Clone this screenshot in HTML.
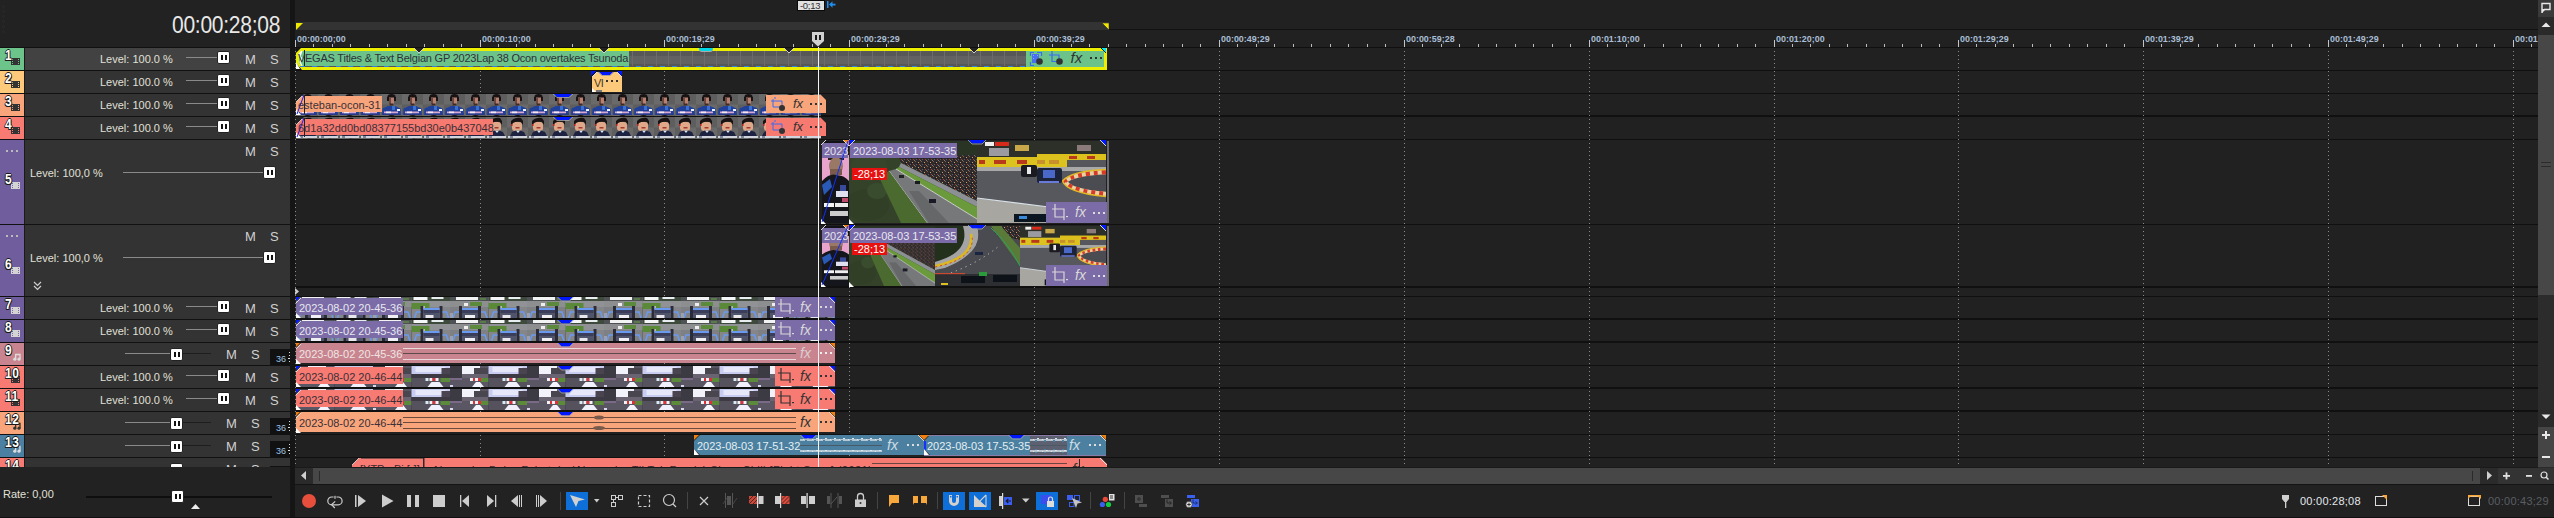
<!DOCTYPE html>
<html><head><meta charset="utf-8"><style>
html,body{margin:0;padding:0;width:2554px;height:518px;overflow:hidden;background:#212121;}
body{position:relative;font-family:"Liberation Sans",sans-serif;}
body>div,body>span,body>svg{position:absolute;}
.t{position:absolute;white-space:nowrap;line-height:1;}
.rl{font-size:9.6px;color:#a9bfd6;letter-spacing:0px;font-weight:bold;transform:scaleX(0.93);transform-origin:0 0;}
.num{font-size:15px;font-weight:bold;color:#fff;letter-spacing:0.6px;transform:scaleX(0.8);transform-origin:0 0;text-shadow:-1px 0 #1a1a1a,1px 0 #1a1a1a,0 -1px #1a1a1a,0 1px #1a1a1a,1px 1px #1a1a1a,-1px 1px #1a1a1a;}
.knob{position:absolute;width:11px;height:11px;background:#fff;border:1px solid #222;border-radius:2px;box-sizing:content-box;}
.knob i{position:absolute;top:3px;width:2px;height:5px;background:#111;}
.knob i:first-child{left:3px}.knob i:last-child{left:7px}
</style></head><body>
<div style="left:0px;top:0px;width:290px;height:47px;background:#222222;"></div>
<div style="left:290px;top:0px;width:5px;height:518px;background:#151515;"></div>
<div style="left:295px;top:0px;width:2243px;height:47px;background:#212121;"></div>
<div style="left:2538px;top:0px;width:16px;height:518px;background:#2b2b2b;"></div>
<div style="left:2px;top:5px;width:3px;height:3px;border:1px solid #2c2c2c;border-radius:50%;box-sizing:border-box"></div>
<div style="left:2px;top:10px;width:3px;height:3px;border:1px solid #2c2c2c;border-radius:50%;box-sizing:border-box"></div>
<div style="left:2px;top:15px;width:3px;height:3px;border:1px solid #2c2c2c;border-radius:50%;box-sizing:border-box"></div>
<div style="left:2px;top:20px;width:3px;height:3px;border:1px solid #2c2c2c;border-radius:50%;box-sizing:border-box"></div>
<div style="left:2px;top:25px;width:3px;height:3px;border:1px solid #2c2c2c;border-radius:50%;box-sizing:border-box"></div>
<div style="left:2px;top:30px;width:3px;height:3px;border:1px solid #2c2c2c;border-radius:50%;box-sizing:border-box"></div>
<span class="t" style="left:172px;top:13.5px;font-size:23px;color:#e8e8e8;letter-spacing:-0.3px;transform:scaleX(0.915);transform-origin:0 0;">00:00:28;08</span>
<div style="left:296px;top:22px;width:813px;height:8px;background:#333333;"></div>
<div style="left:1109px;top:29px;width:1429px;height:1px;background:#121212;"></div>
<svg style="left:296px;top:23px" width="8" height="8"><polygon points="0,0 7,0 0,7" fill="#f0e800"/></svg>
<svg style="left:1102px;top:23px" width="8" height="8"><polygon points="0,0 7,0 7,7" fill="#f0e800" stroke="#1a1a30" stroke-width="0.5"/></svg>
<div style="left:295px;top:40px;width:1px;height:8px;background:#c4c4c4"></div><span class="t rl" style="left:297px;top:34px;">00:00:00;00</span><div style="left:313px;top:44px;width:1px;height:3px;background:#bdbdbd"></div><div style="left:332px;top:44px;width:1px;height:3px;background:#bdbdbd"></div><div style="left:350px;top:44px;width:1px;height:3px;background:#bdbdbd"></div><div style="left:369px;top:44px;width:1px;height:3px;background:#bdbdbd"></div><div style="left:387px;top:44px;width:1px;height:3px;background:#bdbdbd"></div><div style="left:406px;top:44px;width:1px;height:3px;background:#bdbdbd"></div><div style="left:424px;top:44px;width:1px;height:3px;background:#bdbdbd"></div><div style="left:443px;top:44px;width:1px;height:3px;background:#bdbdbd"></div><div style="left:461px;top:44px;width:1px;height:3px;background:#bdbdbd"></div><div style="left:480px;top:40px;width:1px;height:8px;background:#c4c4c4"></div><span class="t rl" style="left:482px;top:34px;">00:00:10;00</span><div style="left:498px;top:44px;width:1px;height:3px;background:#bdbdbd"></div><div style="left:516px;top:44px;width:1px;height:3px;background:#bdbdbd"></div><div style="left:535px;top:44px;width:1px;height:3px;background:#bdbdbd"></div><div style="left:553px;top:44px;width:1px;height:3px;background:#bdbdbd"></div><div style="left:572px;top:44px;width:1px;height:3px;background:#bdbdbd"></div><div style="left:590px;top:44px;width:1px;height:3px;background:#bdbdbd"></div><div style="left:608px;top:44px;width:1px;height:3px;background:#bdbdbd"></div><div style="left:627px;top:44px;width:1px;height:3px;background:#bdbdbd"></div><div style="left:645px;top:44px;width:1px;height:3px;background:#bdbdbd"></div><div style="left:664px;top:40px;width:1px;height:8px;background:#c4c4c4"></div><span class="t rl" style="left:666px;top:34px;">00:00:19;29</span><div style="left:682px;top:44px;width:1px;height:3px;background:#bdbdbd"></div><div style="left:701px;top:44px;width:1px;height:3px;background:#bdbdbd"></div><div style="left:719px;top:44px;width:1px;height:3px;background:#bdbdbd"></div><div style="left:738px;top:44px;width:1px;height:3px;background:#bdbdbd"></div><div style="left:756px;top:44px;width:1px;height:3px;background:#bdbdbd"></div><div style="left:775px;top:44px;width:1px;height:3px;background:#bdbdbd"></div><div style="left:793px;top:44px;width:1px;height:3px;background:#bdbdbd"></div><div style="left:812px;top:44px;width:1px;height:3px;background:#bdbdbd"></div><div style="left:830px;top:44px;width:1px;height:3px;background:#bdbdbd"></div><div style="left:849px;top:40px;width:1px;height:8px;background:#c4c4c4"></div><span class="t rl" style="left:851px;top:34px;">00:00:29;29</span><div style="left:867px;top:44px;width:1px;height:3px;background:#bdbdbd"></div><div style="left:886px;top:44px;width:1px;height:3px;background:#bdbdbd"></div><div style="left:904px;top:44px;width:1px;height:3px;background:#bdbdbd"></div><div style="left:923px;top:44px;width:1px;height:3px;background:#bdbdbd"></div><div style="left:941px;top:44px;width:1px;height:3px;background:#bdbdbd"></div><div style="left:960px;top:44px;width:1px;height:3px;background:#bdbdbd"></div><div style="left:978px;top:44px;width:1px;height:3px;background:#bdbdbd"></div><div style="left:997px;top:44px;width:1px;height:3px;background:#bdbdbd"></div><div style="left:1015px;top:44px;width:1px;height:3px;background:#bdbdbd"></div><div style="left:1034px;top:40px;width:1px;height:8px;background:#c4c4c4"></div><span class="t rl" style="left:1036px;top:34px;">00:00:39;29</span><div style="left:1052px;top:44px;width:1px;height:3px;background:#bdbdbd"></div><div style="left:1071px;top:44px;width:1px;height:3px;background:#bdbdbd"></div><div style="left:1089px;top:44px;width:1px;height:3px;background:#bdbdbd"></div><div style="left:1108px;top:44px;width:1px;height:3px;background:#bdbdbd"></div><div style="left:1126px;top:44px;width:1px;height:3px;background:#bdbdbd"></div><div style="left:1145px;top:44px;width:1px;height:3px;background:#bdbdbd"></div><div style="left:1163px;top:44px;width:1px;height:3px;background:#bdbdbd"></div><div style="left:1182px;top:44px;width:1px;height:3px;background:#bdbdbd"></div><div style="left:1200px;top:44px;width:1px;height:3px;background:#bdbdbd"></div><div style="left:1219px;top:40px;width:1px;height:8px;background:#c4c4c4"></div><span class="t rl" style="left:1221px;top:34px;">00:00:49;29</span><div style="left:1237px;top:44px;width:1px;height:3px;background:#bdbdbd"></div><div style="left:1256px;top:44px;width:1px;height:3px;background:#bdbdbd"></div><div style="left:1274px;top:44px;width:1px;height:3px;background:#bdbdbd"></div><div style="left:1293px;top:44px;width:1px;height:3px;background:#bdbdbd"></div><div style="left:1311px;top:44px;width:1px;height:3px;background:#bdbdbd"></div><div style="left:1330px;top:44px;width:1px;height:3px;background:#bdbdbd"></div><div style="left:1348px;top:44px;width:1px;height:3px;background:#bdbdbd"></div><div style="left:1367px;top:44px;width:1px;height:3px;background:#bdbdbd"></div><div style="left:1385px;top:44px;width:1px;height:3px;background:#bdbdbd"></div><div style="left:1404px;top:40px;width:1px;height:8px;background:#c4c4c4"></div><span class="t rl" style="left:1406px;top:34px;">00:00:59;28</span><div style="left:1422px;top:44px;width:1px;height:3px;background:#bdbdbd"></div><div style="left:1441px;top:44px;width:1px;height:3px;background:#bdbdbd"></div><div style="left:1459px;top:44px;width:1px;height:3px;background:#bdbdbd"></div><div style="left:1478px;top:44px;width:1px;height:3px;background:#bdbdbd"></div><div style="left:1496px;top:44px;width:1px;height:3px;background:#bdbdbd"></div><div style="left:1515px;top:44px;width:1px;height:3px;background:#bdbdbd"></div><div style="left:1533px;top:44px;width:1px;height:3px;background:#bdbdbd"></div><div style="left:1552px;top:44px;width:1px;height:3px;background:#bdbdbd"></div><div style="left:1570px;top:44px;width:1px;height:3px;background:#bdbdbd"></div><div style="left:1589px;top:40px;width:1px;height:8px;background:#c4c4c4"></div><span class="t rl" style="left:1591px;top:34px;">00:01:10;00</span><div style="left:1607px;top:44px;width:1px;height:3px;background:#bdbdbd"></div><div style="left:1626px;top:44px;width:1px;height:3px;background:#bdbdbd"></div><div style="left:1644px;top:44px;width:1px;height:3px;background:#bdbdbd"></div><div style="left:1663px;top:44px;width:1px;height:3px;background:#bdbdbd"></div><div style="left:1681px;top:44px;width:1px;height:3px;background:#bdbdbd"></div><div style="left:1700px;top:44px;width:1px;height:3px;background:#bdbdbd"></div><div style="left:1718px;top:44px;width:1px;height:3px;background:#bdbdbd"></div><div style="left:1737px;top:44px;width:1px;height:3px;background:#bdbdbd"></div><div style="left:1755px;top:44px;width:1px;height:3px;background:#bdbdbd"></div><div style="left:1774px;top:40px;width:1px;height:8px;background:#c4c4c4"></div><span class="t rl" style="left:1776px;top:34px;">00:01:20;00</span><div style="left:1792px;top:44px;width:1px;height:3px;background:#bdbdbd"></div><div style="left:1810px;top:44px;width:1px;height:3px;background:#bdbdbd"></div><div style="left:1829px;top:44px;width:1px;height:3px;background:#bdbdbd"></div><div style="left:1847px;top:44px;width:1px;height:3px;background:#bdbdbd"></div><div style="left:1866px;top:44px;width:1px;height:3px;background:#bdbdbd"></div><div style="left:1884px;top:44px;width:1px;height:3px;background:#bdbdbd"></div><div style="left:1902px;top:44px;width:1px;height:3px;background:#bdbdbd"></div><div style="left:1921px;top:44px;width:1px;height:3px;background:#bdbdbd"></div><div style="left:1939px;top:44px;width:1px;height:3px;background:#bdbdbd"></div><div style="left:1958px;top:40px;width:1px;height:8px;background:#c4c4c4"></div><span class="t rl" style="left:1960px;top:34px;">00:01:29;29</span><div style="left:1976px;top:44px;width:1px;height:3px;background:#bdbdbd"></div><div style="left:1995px;top:44px;width:1px;height:3px;background:#bdbdbd"></div><div style="left:2013px;top:44px;width:1px;height:3px;background:#bdbdbd"></div><div style="left:2032px;top:44px;width:1px;height:3px;background:#bdbdbd"></div><div style="left:2050px;top:44px;width:1px;height:3px;background:#bdbdbd"></div><div style="left:2069px;top:44px;width:1px;height:3px;background:#bdbdbd"></div><div style="left:2087px;top:44px;width:1px;height:3px;background:#bdbdbd"></div><div style="left:2106px;top:44px;width:1px;height:3px;background:#bdbdbd"></div><div style="left:2124px;top:44px;width:1px;height:3px;background:#bdbdbd"></div><div style="left:2143px;top:40px;width:1px;height:8px;background:#c4c4c4"></div><span class="t rl" style="left:2145px;top:34px;">00:01:39;29</span><div style="left:2161px;top:44px;width:1px;height:3px;background:#bdbdbd"></div><div style="left:2180px;top:44px;width:1px;height:3px;background:#bdbdbd"></div><div style="left:2198px;top:44px;width:1px;height:3px;background:#bdbdbd"></div><div style="left:2217px;top:44px;width:1px;height:3px;background:#bdbdbd"></div><div style="left:2235px;top:44px;width:1px;height:3px;background:#bdbdbd"></div><div style="left:2254px;top:44px;width:1px;height:3px;background:#bdbdbd"></div><div style="left:2272px;top:44px;width:1px;height:3px;background:#bdbdbd"></div><div style="left:2291px;top:44px;width:1px;height:3px;background:#bdbdbd"></div><div style="left:2309px;top:44px;width:1px;height:3px;background:#bdbdbd"></div><div style="left:2328px;top:40px;width:1px;height:8px;background:#c4c4c4"></div><span class="t rl" style="left:2330px;top:34px;">00:01:49;29</span><div style="left:2346px;top:44px;width:1px;height:3px;background:#bdbdbd"></div><div style="left:2365px;top:44px;width:1px;height:3px;background:#bdbdbd"></div><div style="left:2383px;top:44px;width:1px;height:3px;background:#bdbdbd"></div><div style="left:2402px;top:44px;width:1px;height:3px;background:#bdbdbd"></div><div style="left:2420px;top:44px;width:1px;height:3px;background:#bdbdbd"></div><div style="left:2439px;top:44px;width:1px;height:3px;background:#bdbdbd"></div><div style="left:2457px;top:44px;width:1px;height:3px;background:#bdbdbd"></div><div style="left:2476px;top:44px;width:1px;height:3px;background:#bdbdbd"></div><div style="left:2494px;top:44px;width:1px;height:3px;background:#bdbdbd"></div><div style="left:2513px;top:40px;width:1px;height:8px;background:#c4c4c4"></div><span class="t rl" style="left:2515px;top:34px;">00:01:59;29</span><div style="left:2531px;top:44px;width:1px;height:3px;background:#bdbdbd"></div>
<div style="left:295px;top:47px;width:2243px;height:1px;background:#101010;"></div>
<div style="left:0px;top:47px;width:290px;height:420px;background:#111111;"></div>
<div style="left:0px;top:48px;width:24px;height:22px;background:#6dc48b;"></div>
<div style="left:24px;top:48px;width:1px;height:22px;background:#1a1a1a;"></div>
<div style="left:25px;top:48px;width:265px;height:22px;background:#424242;"></div>
<svg style="left:11px;top:58px" width="9" height="7"><rect width="9" height="7" fill="#333"/><rect x="1" y="1" width="1" height="1" fill="#6dc48b"/><rect x="1" y="3" width="1" height="1" fill="#6dc48b"/><rect x="1" y="5" width="1" height="1" fill="#6dc48b"/><rect x="7" y="1" width="1" height="1" fill="#6dc48b"/><rect x="7" y="3" width="1" height="1" fill="#6dc48b"/><rect x="7" y="5" width="1" height="1" fill="#6dc48b"/></svg>
<span class="t num" style="left:5px;top:47px;">1</span>
<span class="t" style="left:100px;top:54px;font-size:11px;color:#e0e0d8;">Level: 100.0 %</span>
<div style="left:186px;top:57px;width:31px;height:1px;background:#8a8a8a;"></div>
<div class="knob" style="left:217px;top:51px"><i></i><i></i></div>
<span class="t" style="left:245px;top:53px;font-size:13px;color:#d0d0d0;">M</span>
<span class="t" style="left:270px;top:53px;font-size:13px;color:#d0d0d0;">S</span>
<div style="left:0px;top:71px;width:24px;height:22px;background:#fdc97b;"></div>
<div style="left:24px;top:71px;width:1px;height:22px;background:#1a1a1a;"></div>
<div style="left:25px;top:71px;width:265px;height:22px;background:#333333;"></div>
<svg style="left:11px;top:81px" width="9" height="7"><rect width="9" height="7" fill="#333"/><rect x="1" y="1" width="1" height="1" fill="#fdc97b"/><rect x="1" y="3" width="1" height="1" fill="#fdc97b"/><rect x="1" y="5" width="1" height="1" fill="#fdc97b"/><rect x="7" y="1" width="1" height="1" fill="#fdc97b"/><rect x="7" y="3" width="1" height="1" fill="#fdc97b"/><rect x="7" y="5" width="1" height="1" fill="#fdc97b"/></svg>
<span class="t num" style="left:5px;top:70px;">2</span>
<span class="t" style="left:100px;top:77px;font-size:11px;color:#e0e0d8;">Level: 100.0 %</span>
<div style="left:186px;top:80px;width:31px;height:1px;background:#8a8a8a;"></div>
<div class="knob" style="left:217px;top:74px"><i></i><i></i></div>
<span class="t" style="left:245px;top:76px;font-size:13px;color:#d0d0d0;">M</span>
<span class="t" style="left:270px;top:76px;font-size:13px;color:#d0d0d0;">S</span>
<div style="left:0px;top:94px;width:24px;height:22px;background:#f9a57b;"></div>
<div style="left:24px;top:94px;width:1px;height:22px;background:#1a1a1a;"></div>
<div style="left:25px;top:94px;width:265px;height:22px;background:#333333;"></div>
<svg style="left:11px;top:104px" width="9" height="7"><rect width="9" height="7" fill="#333"/><rect x="1" y="1" width="1" height="1" fill="#f9a57b"/><rect x="1" y="3" width="1" height="1" fill="#f9a57b"/><rect x="1" y="5" width="1" height="1" fill="#f9a57b"/><rect x="7" y="1" width="1" height="1" fill="#f9a57b"/><rect x="7" y="3" width="1" height="1" fill="#f9a57b"/><rect x="7" y="5" width="1" height="1" fill="#f9a57b"/></svg>
<span class="t num" style="left:5px;top:93px;">3</span>
<span class="t" style="left:100px;top:100px;font-size:11px;color:#e0e0d8;">Level: 100.0 %</span>
<div style="left:186px;top:103px;width:31px;height:1px;background:#8a8a8a;"></div>
<div class="knob" style="left:217px;top:97px"><i></i><i></i></div>
<span class="t" style="left:245px;top:99px;font-size:13px;color:#d0d0d0;">M</span>
<span class="t" style="left:270px;top:99px;font-size:13px;color:#d0d0d0;">S</span>
<div style="left:0px;top:117px;width:24px;height:22px;background:#f77b72;"></div>
<div style="left:24px;top:117px;width:1px;height:22px;background:#1a1a1a;"></div>
<div style="left:25px;top:117px;width:265px;height:22px;background:#333333;"></div>
<svg style="left:11px;top:127px" width="9" height="7"><rect width="9" height="7" fill="#333"/><rect x="1" y="1" width="1" height="1" fill="#f77b72"/><rect x="1" y="3" width="1" height="1" fill="#f77b72"/><rect x="1" y="5" width="1" height="1" fill="#f77b72"/><rect x="7" y="1" width="1" height="1" fill="#f77b72"/><rect x="7" y="3" width="1" height="1" fill="#f77b72"/><rect x="7" y="5" width="1" height="1" fill="#f77b72"/></svg>
<span class="t num" style="left:5px;top:116px;">4</span>
<span class="t" style="left:100px;top:123px;font-size:11px;color:#e0e0d8;">Level: 100.0 %</span>
<div style="left:186px;top:126px;width:31px;height:1px;background:#8a8a8a;"></div>
<div class="knob" style="left:217px;top:120px"><i></i><i></i></div>
<span class="t" style="left:245px;top:122px;font-size:13px;color:#d0d0d0;">M</span>
<span class="t" style="left:270px;top:122px;font-size:13px;color:#d0d0d0;">S</span>
<div style="left:0px;top:140px;width:24px;height:84px;background:#705d9d;"></div>
<div style="left:24px;top:140px;width:1px;height:84px;background:#1a1a1a;"></div>
<div style="left:25px;top:140px;width:265px;height:84px;background:#333333;"></div>
<svg style="left:11px;top:182px" width="9" height="7"><rect width="9" height="7" fill="#d4d4d4"/><rect x="1" y="1" width="1" height="1" fill="#7a6aa0"/><rect x="1" y="3" width="1" height="1" fill="#7a6aa0"/><rect x="1" y="5" width="1" height="1" fill="#7a6aa0"/><rect x="7" y="1" width="1" height="1" fill="#7a6aa0"/><rect x="7" y="3" width="1" height="1" fill="#7a6aa0"/><rect x="7" y="5" width="1" height="1" fill="#7a6aa0"/></svg>
<span class="t num" style="left:5px;top:171px;">5</span>
<div style="left:6px;top:150px;width:2px;height:2px;background:#bbb;box-shadow:5px 0 #bbb,10px 0 #bbb"></div>
<span class="t" style="left:245px;top:145px;font-size:13px;color:#d0d0d0;">M</span>
<span class="t" style="left:270px;top:145px;font-size:13px;color:#d0d0d0;">S</span>
<span class="t" style="left:30px;top:168px;font-size:11px;color:#e0e0d8;">Level: 100,0 %</span>
<div style="left:123px;top:172px;width:140px;height:1px;background:#8a8a8a;"></div>
<div class="knob" style="left:263px;top:166px"><i></i><i></i></div>
<div style="left:0px;top:225px;width:24px;height:71px;background:#705d9d;"></div>
<div style="left:24px;top:225px;width:1px;height:71px;background:#1a1a1a;"></div>
<div style="left:25px;top:225px;width:265px;height:71px;background:#333333;"></div>
<svg style="left:11px;top:267px" width="9" height="7"><rect width="9" height="7" fill="#d4d4d4"/><rect x="1" y="1" width="1" height="1" fill="#7a6aa0"/><rect x="1" y="3" width="1" height="1" fill="#7a6aa0"/><rect x="1" y="5" width="1" height="1" fill="#7a6aa0"/><rect x="7" y="1" width="1" height="1" fill="#7a6aa0"/><rect x="7" y="3" width="1" height="1" fill="#7a6aa0"/><rect x="7" y="5" width="1" height="1" fill="#7a6aa0"/></svg>
<span class="t num" style="left:5px;top:256px;">6</span>
<div style="left:6px;top:235px;width:2px;height:2px;background:#bbb;box-shadow:5px 0 #bbb,10px 0 #bbb"></div>
<span class="t" style="left:245px;top:230px;font-size:13px;color:#d0d0d0;">M</span>
<span class="t" style="left:270px;top:230px;font-size:13px;color:#d0d0d0;">S</span>
<span class="t" style="left:30px;top:253px;font-size:11px;color:#e0e0d8;">Level: 100,0 %</span>
<div style="left:123px;top:257px;width:140px;height:1px;background:#8a8a8a;"></div>
<div class="knob" style="left:263px;top:251px"><i></i><i></i></div>
<svg style="left:33px;top:281px" width="10" height="10"><polyline points="1,1 4.5,4.5 8,1" stroke="#cfcfcf" stroke-width="1.2" fill="none"/><polyline points="1,5 4.5,8.5 8,5" stroke="#cfcfcf" stroke-width="1.2" fill="none"/></svg>
<div style="left:0px;top:297px;width:24px;height:22px;background:#705d9d;"></div>
<div style="left:24px;top:297px;width:1px;height:22px;background:#1a1a1a;"></div>
<div style="left:25px;top:297px;width:265px;height:22px;background:#333333;"></div>
<svg style="left:11px;top:307px" width="9" height="7"><rect width="9" height="7" fill="#d4d4d4"/><rect x="1" y="1" width="1" height="1" fill="#7a6aa0"/><rect x="1" y="3" width="1" height="1" fill="#7a6aa0"/><rect x="1" y="5" width="1" height="1" fill="#7a6aa0"/><rect x="7" y="1" width="1" height="1" fill="#7a6aa0"/><rect x="7" y="3" width="1" height="1" fill="#7a6aa0"/><rect x="7" y="5" width="1" height="1" fill="#7a6aa0"/></svg>
<span class="t num" style="left:5px;top:296px;">7</span>
<span class="t" style="left:100px;top:303px;font-size:11px;color:#e0e0d8;">Level: 100.0 %</span>
<div style="left:186px;top:306px;width:31px;height:1px;background:#8a8a8a;"></div>
<div class="knob" style="left:217px;top:300px"><i></i><i></i></div>
<span class="t" style="left:245px;top:302px;font-size:13px;color:#d0d0d0;">M</span>
<span class="t" style="left:270px;top:302px;font-size:13px;color:#d0d0d0;">S</span>
<div style="left:0px;top:320px;width:24px;height:22px;background:#705d9d;"></div>
<div style="left:24px;top:320px;width:1px;height:22px;background:#1a1a1a;"></div>
<div style="left:25px;top:320px;width:265px;height:22px;background:#333333;"></div>
<svg style="left:11px;top:330px" width="9" height="7"><rect width="9" height="7" fill="#d4d4d4"/><rect x="1" y="1" width="1" height="1" fill="#7a6aa0"/><rect x="1" y="3" width="1" height="1" fill="#7a6aa0"/><rect x="1" y="5" width="1" height="1" fill="#7a6aa0"/><rect x="7" y="1" width="1" height="1" fill="#7a6aa0"/><rect x="7" y="3" width="1" height="1" fill="#7a6aa0"/><rect x="7" y="5" width="1" height="1" fill="#7a6aa0"/></svg>
<span class="t num" style="left:5px;top:319px;">8</span>
<span class="t" style="left:100px;top:326px;font-size:11px;color:#e0e0d8;">Level: 100.0 %</span>
<div style="left:186px;top:329px;width:31px;height:1px;background:#8a8a8a;"></div>
<div class="knob" style="left:217px;top:323px"><i></i><i></i></div>
<span class="t" style="left:245px;top:325px;font-size:13px;color:#d0d0d0;">M</span>
<span class="t" style="left:270px;top:325px;font-size:13px;color:#d0d0d0;">S</span>
<div style="left:0px;top:343px;width:24px;height:22px;background:#c8848f;"></div>
<div style="left:24px;top:343px;width:1px;height:22px;background:#1a1a1a;"></div>
<div style="left:25px;top:343px;width:265px;height:22px;background:#333333;"></div>
<svg style="left:13px;top:353px" width="8" height="8"><path d="M2,1.5 H7 V6" stroke="#dcdcdc" stroke-width="1.3" fill="none"/><rect x="2" y="1" width="1.3" height="5.5" fill="#dcdcdc"/><circle cx="1.8" cy="6.2" r="1.6" fill="#dcdcdc"/><circle cx="6" cy="6.2" r="1.6" fill="#dcdcdc"/></svg>
<span class="t num" style="left:5px;top:342px;">9</span>
<div style="left:125px;top:353px;width:46px;height:1px;background:#8a8a8a;"></div>
<div style="left:182px;top:353px;width:29px;height:1px;background:#1e1e1e;"></div>
<div class="knob" style="left:170px;top:348px"><i></i><i></i></div>
<span class="t" style="left:226px;top:348px;font-size:13px;color:#d0d0d0;">M</span>
<span class="t" style="left:251px;top:348px;font-size:13px;color:#d0d0d0;">S</span>
<div style="left:270px;top:349px;width:20px;height:16px;background:#111111;"></div>
<span class="t" style="left:276px;top:355px;font-size:9px;color:#9fc3e6;">36</span>
<svg style="left:288px;top:351px" width="3" height="12"><rect x="1" y="1" width="1" height="1" fill="#ddd"/><rect x="1" y="4" width="1" height="1" fill="#ddd"/><rect x="0" y="7" width="2" height="1" fill="#ddd"/><rect x="1" y="10" width="1" height="1" fill="#ddd"/></svg>
<div style="left:0px;top:366px;width:24px;height:22px;background:#f77b72;"></div>
<div style="left:24px;top:366px;width:1px;height:22px;background:#1a1a1a;"></div>
<div style="left:25px;top:366px;width:265px;height:22px;background:#333333;"></div>
<svg style="left:11px;top:376px" width="9" height="7"><rect width="9" height="7" fill="#333"/><rect x="1" y="1" width="1" height="1" fill="#f77b72"/><rect x="1" y="3" width="1" height="1" fill="#f77b72"/><rect x="1" y="5" width="1" height="1" fill="#f77b72"/><rect x="7" y="1" width="1" height="1" fill="#f77b72"/><rect x="7" y="3" width="1" height="1" fill="#f77b72"/><rect x="7" y="5" width="1" height="1" fill="#f77b72"/></svg>
<span class="t num" style="left:5px;top:365px;">10</span>
<span class="t" style="left:100px;top:372px;font-size:11px;color:#e0e0d8;">Level: 100.0 %</span>
<div style="left:186px;top:375px;width:31px;height:1px;background:#8a8a8a;"></div>
<div class="knob" style="left:217px;top:369px"><i></i><i></i></div>
<span class="t" style="left:245px;top:371px;font-size:13px;color:#d0d0d0;">M</span>
<span class="t" style="left:270px;top:371px;font-size:13px;color:#d0d0d0;">S</span>
<div style="left:0px;top:389px;width:24px;height:22px;background:#f77b72;"></div>
<div style="left:24px;top:389px;width:1px;height:22px;background:#1a1a1a;"></div>
<div style="left:25px;top:389px;width:265px;height:22px;background:#333333;"></div>
<svg style="left:11px;top:399px" width="9" height="7"><rect width="9" height="7" fill="#333"/><rect x="1" y="1" width="1" height="1" fill="#f77b72"/><rect x="1" y="3" width="1" height="1" fill="#f77b72"/><rect x="1" y="5" width="1" height="1" fill="#f77b72"/><rect x="7" y="1" width="1" height="1" fill="#f77b72"/><rect x="7" y="3" width="1" height="1" fill="#f77b72"/><rect x="7" y="5" width="1" height="1" fill="#f77b72"/></svg>
<span class="t num" style="left:5px;top:388px;">11</span>
<span class="t" style="left:100px;top:395px;font-size:11px;color:#e0e0d8;">Level: 100.0 %</span>
<div style="left:186px;top:398px;width:31px;height:1px;background:#8a8a8a;"></div>
<div class="knob" style="left:217px;top:392px"><i></i><i></i></div>
<span class="t" style="left:245px;top:394px;font-size:13px;color:#d0d0d0;">M</span>
<span class="t" style="left:270px;top:394px;font-size:13px;color:#d0d0d0;">S</span>
<div style="left:0px;top:412px;width:24px;height:22px;background:#f9a57b;"></div>
<div style="left:24px;top:412px;width:1px;height:22px;background:#1a1a1a;"></div>
<div style="left:25px;top:412px;width:265px;height:22px;background:#333333;"></div>
<svg style="left:13px;top:422px" width="8" height="8"><path d="M2,1.5 H7 V6" stroke="#333" stroke-width="1.3" fill="none"/><rect x="2" y="1" width="1.3" height="5.5" fill="#333"/><circle cx="1.8" cy="6.2" r="1.6" fill="#333"/><circle cx="6" cy="6.2" r="1.6" fill="#333"/></svg>
<span class="t num" style="left:5px;top:411px;">12</span>
<div style="left:125px;top:422px;width:46px;height:1px;background:#8a8a8a;"></div>
<div style="left:182px;top:422px;width:29px;height:1px;background:#1e1e1e;"></div>
<div class="knob" style="left:170px;top:417px"><i></i><i></i></div>
<span class="t" style="left:226px;top:417px;font-size:13px;color:#d0d0d0;">M</span>
<span class="t" style="left:251px;top:417px;font-size:13px;color:#d0d0d0;">S</span>
<div style="left:270px;top:418px;width:20px;height:16px;background:#111111;"></div>
<span class="t" style="left:276px;top:424px;font-size:9px;color:#9fc3e6;">36</span>
<svg style="left:288px;top:420px" width="3" height="12"><rect x="1" y="1" width="1" height="1" fill="#ddd"/><rect x="1" y="4" width="1" height="1" fill="#ddd"/><rect x="0" y="7" width="2" height="1" fill="#ddd"/><rect x="1" y="10" width="1" height="1" fill="#ddd"/></svg>
<div style="left:0px;top:435px;width:24px;height:22px;background:#4b80a2;"></div>
<div style="left:24px;top:435px;width:1px;height:22px;background:#1a1a1a;"></div>
<div style="left:25px;top:435px;width:265px;height:22px;background:#333333;"></div>
<svg style="left:13px;top:445px" width="8" height="8"><path d="M2,1.5 H7 V6" stroke="#dcdcdc" stroke-width="1.3" fill="none"/><rect x="2" y="1" width="1.3" height="5.5" fill="#dcdcdc"/><circle cx="1.8" cy="6.2" r="1.6" fill="#dcdcdc"/><circle cx="6" cy="6.2" r="1.6" fill="#dcdcdc"/></svg>
<span class="t num" style="left:5px;top:434px;">13</span>
<div style="left:125px;top:445px;width:46px;height:1px;background:#8a8a8a;"></div>
<div style="left:182px;top:445px;width:29px;height:1px;background:#1e1e1e;"></div>
<div class="knob" style="left:170px;top:440px"><i></i><i></i></div>
<span class="t" style="left:226px;top:440px;font-size:13px;color:#d0d0d0;">M</span>
<span class="t" style="left:251px;top:440px;font-size:13px;color:#d0d0d0;">S</span>
<div style="left:270px;top:441px;width:20px;height:16px;background:#111111;"></div>
<span class="t" style="left:276px;top:447px;font-size:9px;color:#9fc3e6;">36</span>
<svg style="left:288px;top:443px" width="3" height="12"><rect x="1" y="1" width="1" height="1" fill="#ddd"/><rect x="1" y="4" width="1" height="1" fill="#ddd"/><rect x="0" y="7" width="2" height="1" fill="#ddd"/><rect x="1" y="10" width="1" height="1" fill="#ddd"/></svg>
<div style="left:0px;top:458px;width:24px;height:9px;background:#f77b72;"></div>
<div style="left:24px;top:458px;width:1px;height:9px;background:#1a1a1a;"></div>
<div style="left:25px;top:458px;width:265px;height:9px;background:#333333;"></div>
<svg style="left:13px;top:468px" width="8" height="8"><path d="M2,1.5 H7 V6" stroke="#333" stroke-width="1.3" fill="none"/><rect x="2" y="1" width="1.3" height="5.5" fill="#333"/><circle cx="1.8" cy="6.2" r="1.6" fill="#333"/><circle cx="6" cy="6.2" r="1.6" fill="#333"/></svg>
<span class="t num" style="left:5px;top:457px;">14</span>
<div class="knob" style="left:170px;top:463px"><i></i><i></i></div>
<span class="t" style="left:226px;top:463px;font-size:13px;color:#d0d0d0;">M</span>
<span class="t" style="left:251px;top:463px;font-size:13px;color:#d0d0d0;">S</span>
<div style="left:270px;top:466px;width:20px;height:3px;background:#111111;"></div>
<div style="left:0px;top:467px;width:290px;height:1px;background:#111;"></div>
<div style="left:295px;top:48px;width:2243px;height:419px;background:#212121;"></div>
<div style="left:295px;top:70px;width:2243px;height:1px;background:#101010;"></div>
<div style="left:295px;top:93px;width:2243px;height:1px;background:#101010;"></div>
<div style="left:295px;top:115px;width:2243px;height:2px;background:#101010;"></div>
<div style="left:295px;top:139px;width:2243px;height:1px;background:#101010;"></div>
<div style="left:295px;top:224px;width:2243px;height:1px;background:#101010;"></div>
<div style="left:295px;top:286px;width:2243px;height:2px;background:#101010;"></div>
<div style="left:295px;top:296px;width:2243px;height:1px;background:#101010;"></div>
<div style="left:295px;top:318px;width:2243px;height:2px;background:#101010;"></div>
<div style="left:295px;top:341px;width:2243px;height:2px;background:#101010;"></div>
<div style="left:295px;top:365px;width:2243px;height:1px;background:#101010;"></div>
<div style="left:295px;top:387px;width:2243px;height:2px;background:#101010;"></div>
<div style="left:295px;top:410px;width:2243px;height:2px;background:#101010;"></div>
<div style="left:295px;top:434px;width:2243px;height:1px;background:#101010;"></div>
<div style="left:295px;top:457px;width:2243px;height:1px;background:#101010;"></div>
<svg style="left:295px;top:288px" width="6" height="8"><polygon points="0,0 4,3.5 0,7" fill="#cfcfcf"/></svg>
<div style="left:295px;top:48px;width:1px;height:419px;background:repeating-linear-gradient(to bottom,transparent 0,transparent 3px,#8a8a8a 3px,#8a8a8a 4px)"></div>
<div style="left:480px;top:48px;width:1px;height:419px;background:repeating-linear-gradient(to bottom,transparent 0,transparent 3px,#8a8a8a 3px,#8a8a8a 4px)"></div>
<div style="left:664px;top:48px;width:1px;height:419px;background:repeating-linear-gradient(to bottom,transparent 0,transparent 3px,#8a8a8a 3px,#8a8a8a 4px)"></div>
<div style="left:849px;top:48px;width:1px;height:419px;background:repeating-linear-gradient(to bottom,transparent 0,transparent 3px,#8a8a8a 3px,#8a8a8a 4px)"></div>
<div style="left:1034px;top:48px;width:1px;height:419px;background:repeating-linear-gradient(to bottom,transparent 0,transparent 3px,#8a8a8a 3px,#8a8a8a 4px)"></div>
<div style="left:1219px;top:48px;width:1px;height:419px;background:repeating-linear-gradient(to bottom,transparent 0,transparent 3px,#8a8a8a 3px,#8a8a8a 4px)"></div>
<div style="left:1404px;top:48px;width:1px;height:419px;background:repeating-linear-gradient(to bottom,transparent 0,transparent 3px,#8a8a8a 3px,#8a8a8a 4px)"></div>
<div style="left:1589px;top:48px;width:1px;height:419px;background:repeating-linear-gradient(to bottom,transparent 0,transparent 3px,#8a8a8a 3px,#8a8a8a 4px)"></div>
<div style="left:1774px;top:48px;width:1px;height:419px;background:repeating-linear-gradient(to bottom,transparent 0,transparent 3px,#8a8a8a 3px,#8a8a8a 4px)"></div>
<div style="left:1958px;top:48px;width:1px;height:419px;background:repeating-linear-gradient(to bottom,transparent 0,transparent 3px,#8a8a8a 3px,#8a8a8a 4px)"></div>
<div style="left:2143px;top:48px;width:1px;height:419px;background:repeating-linear-gradient(to bottom,transparent 0,transparent 3px,#8a8a8a 3px,#8a8a8a 4px)"></div>
<div style="left:2328px;top:48px;width:1px;height:419px;background:repeating-linear-gradient(to bottom,transparent 0,transparent 3px,#8a8a8a 3px,#8a8a8a 4px)"></div>
<div style="left:2513px;top:48px;width:1px;height:419px;background:repeating-linear-gradient(to bottom,transparent 0,transparent 3px,#8a8a8a 3px,#8a8a8a 4px)"></div>
<svg width="0" height="0" style="left:0;top:0"><defs>
<pattern id="chk" width="12" height="16" patternUnits="userSpaceOnUse"><rect width="12" height="8" fill="#575757"/><rect y="8" width="12" height="8" fill="#626262"/><rect width="1" height="16" fill="#6c6c6c"/></pattern>
<pattern id="ocon" width="21" height="21" patternUnits="userSpaceOnUse" patternTransform="translate(1,0)">
 <rect width="21" height="21" fill="#5e5e5e"/><rect width="10.5" height="10.5" fill="#6a6a6a"/><rect x="10.5" y="10.5" width="10.5" height="10.5" fill="#6a6a6a"/>
 <ellipse cx="10.5" cy="2.5" rx="4" ry="2.5" fill="#181212"/><rect x="6" y="3" width="2" height="4" fill="#181212"/><rect x="13" y="3" width="2" height="4" fill="#181212"/>
 <rect x="8" y="3.5" width="5" height="7" fill="#b88070"/><rect x="8" y="4" width="2" height="6" fill="#6a4a40"/><rect x="8.5" y="9.5" width="4" height="2" fill="#3a2a28"/>
 <polygon points="1,21 1.5,14.5 7,12 14,12 19.5,14.5 20,21" fill="#20409a"/><rect x="11" y="12" width="3" height="4" fill="#3a70d0"/>
 <rect x="3" y="17.5" width="14" height="2" fill="#d8a8d0"/><rect x="5" y="17.5" width="5" height="2" fill="#f0e8f0"/><rect x="16" y="15" width="3" height="2" fill="#f0f4ff"/><rect x="2" y="19.5" width="17" height="1.5" fill="#2a3a8a"/>
</pattern>
<pattern id="p2" width="21" height="21" patternUnits="userSpaceOnUse" patternTransform="translate(1,0)">
 <rect width="21" height="21" fill="#5e5e5e"/><rect width="10.5" height="10.5" fill="#6a6a6a"/><rect x="10.5" y="10.5" width="10.5" height="10.5" fill="#6a6a6a"/>
 <rect x="5" y="5" width="10" height="9" rx="3" fill="#e0a888"/><path d="M4,9 V4 Q8,0 14,1 L16,4 V8 L14,5 Q9,4 6,6 Z" fill="#181212"/><rect x="8.5" y="10" width="4" height="1.5" fill="#a03a30"/><rect x="4" y="7" width="1.5" height="2" fill="#c02020"/>
 <polygon points="3,19 5,15 9,13.5 13,13.5 17,15 19,19" fill="#1c2240"/><polygon points="9,13.5 11,16 13,13.5" fill="#d8e8f0"/><rect x="1" y="19" width="19" height="2" fill="#d0d4dc"/><rect x="3" y="19.5" width="3" height="1" fill="#2a3a5a"/>
</pattern>
<pattern id="wfn" width="9" height="4" patternUnits="userSpaceOnUse"><rect x="1" y="0" width="1" height="1" fill="#dfe6ea"/><rect x="5" y="3" width="2" height="1" fill="#dfe6ea"/><rect x="3" y="1" width="2" height="2" fill="#4b80a0"/></pattern>
<pattern id="onb1" width="77" height="21" patternUnits="userSpaceOnUse">
 <g>
 <rect width="38.5" height="21" fill="#7e8084"/><rect width="38.5" height="4" fill="#4e5254"/><rect x="6" y="0" width="22" height="3" fill="#f2f4f4"/><rect x="30" y="1" width="6" height="2" fill="#5a7a4a"/>
 <rect x="0" y="4" width="38.5" height="6" fill="#8c8e90"/><rect x="20" y="5" width="12" height="4" fill="#5c8a3c"/><rect x="14" y="6" width="4" height="3" fill="#eee"/>
 <rect x="9" y="9" width="3" height="12" fill="#2c2c38"/><rect x="28" y="9" width="3" height="12" fill="#2c2c38"/>
 <rect x="12" y="11" width="16" height="2" fill="#6a9af0"/><rect x="12" y="13" width="16" height="3" fill="#3a3e5a"/>
 <path d="M3,21 L5,15 H9 M31,15 H35 L37,21" stroke="#6a9af0" stroke-width="1.5" fill="none"/>
 <rect x="12" y="16" width="16" height="5" fill="#50546a"/><rect x="15" y="18" width="10" height="3" fill="#f0f0f4"/>
 <rect x="0" y="16" width="3" height="5" fill="#9aa0b0"/>
 </g>
 <g transform="translate(38.5,0)">
 <rect width="38.5" height="21" fill="#84868a"/><rect width="38.5" height="4" fill="#3e4a3c"/><rect x="2" y="0" width="14" height="3" fill="#f4f6f8"/><rect x="20" y="0" width="12" height="2" fill="#e8eef0"/>
 <rect x="0" y="4" width="38.5" height="6" fill="#909296"/><rect x="0" y="6" width="18" height="6" fill="#5a8a38"/><rect x="10" y="9" width="3" height="3" fill="#fff"/>
 <rect x="9" y="9" width="3" height="12" fill="#2c2c38"/><rect x="28" y="9" width="3" height="12" fill="#2c2c38"/>
 <rect x="12" y="11" width="16" height="2" fill="#6a9af0"/><rect x="12" y="13" width="16" height="3" fill="#3a3e5a"/>
 <path d="M3,21 L5,15 H9 M31,15 H35 L37,21" stroke="#6a9af0" stroke-width="1.5" fill="none"/>
 <rect x="12" y="16" width="16" height="5" fill="#50546a"/><rect x="14" y="18" width="8" height="3" fill="#e8e8ec"/>
 </g>
</pattern>
<pattern id="onb2" width="77" height="21" patternUnits="userSpaceOnUse">
 <g>
 <rect width="38.5" height="21" fill="#5a5664"/><rect x="0" y="0" width="12" height="13" fill="#3c3a42"/>
 <rect x="12" y="0" width="18" height="8" fill="#f2f2fa"/><rect x="24" y="2" width="14" height="8" fill="#4a4650"/>
 <rect x="12" y="8" width="26" height="4" fill="#6a6472"/>
 <rect x="0" y="12" width="12" height="2" fill="#7a6a88"/>
 <rect x="20" y="12" width="3" height="3" fill="#f4f4f4"/><rect x="23" y="12" width="2" height="3" fill="#e0303c"/><rect x="25" y="12" width="3" height="3" fill="#f4f4f4"/><rect x="28" y="12" width="3" height="3" fill="#e0303c"/>
 <rect x="31" y="12" width="7.5" height="4" fill="#5a8a3a"/>
 <polygon points="22,21 26,16 30,16 34,21" fill="#f4f4fc"/><rect x="0" y="19" width="3" height="2" fill="#d8d8f0"/>
 </g>
 <g transform="translate(38.5,0)">
 <rect width="38.5" height="21" fill="#55525e"/><rect x="0" y="0" width="38.5" height="8" fill="#c8ccf0"/><rect x="4" y="1" width="30" height="5" fill="#e6e8fa"/><rect x="30" y="2" width="8.5" height="8" fill="#4a4450"/>
 <rect x="0" y="8" width="38.5" height="4" fill="#3e3a44"/>
 <rect x="14" y="12" width="3" height="3" fill="#d8eaf4"/><rect x="18" y="12" width="3" height="3" fill="#f4f4f4"/><rect x="21" y="12" width="3" height="3" fill="#e0303c"/><rect x="24" y="12" width="3" height="3" fill="#f4f4f4"/>
 <rect x="29" y="12" width="9.5" height="4" fill="#5a8a3a"/>
 <polygon points="16,21 20,16 28,16 32,21" fill="#f0f0fc"/>
 </g>
</pattern>
</defs></svg>
<svg style="left:296px;top:48px" width="811" height="22"><rect x="0" y="0" width="8" height="22" fill="#151515"/><polygon points="5,0 811,0 811,22 6,22 0,15 0,5" fill="#ecf000"/><polygon points="6,3 808,3 808,19 7,19 3,15 3,6" fill="#6cc38a"/><rect x="333" y="3" width="397" height="16" fill="url(#chk)"/><polygon points="0,14 4,21 0,21" fill="#fff"/><polygon points="805,0 810,0 810,5" fill="#00e8ff"/><line x1="805" y1="0" x2="810" y2="5" stroke="#222" stroke-width="1"/><rect x="8" y="2" width="1" height="16" fill="#222"/><path d="M3,6 L6,3 L4,8 L6,11 L4,14 L6,18" stroke="#fff" stroke-width="1.2" fill="none"/></svg>
<div style="left:300px;top:66px;width:726px;height:1px;background:repeating-linear-gradient(to right,#2a86e0 0,#2a86e0 5px,#555 5px,#555 12px)"></div>
<span class="t" style="left:305px;top:53px;font-size:11px;color:#30303c;letter-spacing:-0.22px;">EGAS Titles &amp; Text Belgian GP 2023Lap 38 Ocon overtakes Tsunoda</span>
<span class="t" style="left:298px;top:53px;font-size:11px;color:#30303c;">V</span>
<svg style="left:414px;top:48px" width="10" height="6"><polygon points="0,0 10,0 5,5" fill="#222"/><polyline points="0,0 5,5 10,0" stroke="#eee" stroke-width="0.8" fill="none"/></svg>
<svg style="left:599px;top:48px" width="10" height="6"><polygon points="0,0 10,0 5,5" fill="#222"/><polyline points="0,0 5,5 10,0" stroke="#eee" stroke-width="0.8" fill="none"/></svg>
<svg style="left:784px;top:48px" width="10" height="6"><polygon points="0,0 10,0 5,5" fill="#222"/><polyline points="0,0 5,5 10,0" stroke="#eee" stroke-width="0.8" fill="none"/></svg>
<svg style="left:969px;top:48px" width="10" height="6"><polygon points="0,0 10,0 5,5" fill="#222"/><polyline points="0,0 5,5 10,0" stroke="#eee" stroke-width="0.8" fill="none"/></svg>
<div style="left:699px;top:48px;width:14px;height:3px;background:#00d8e8;border-radius:0 0 5px 5px;box-shadow:0 1px 0 #aaa"></div>
<svg style="left:1028px;top:50px" width="76" height="18">
<path d="M2.5,6 V2.5 H6 M2.5,12 V15.5 H6 M9,2.5 H13.5 V6" stroke="#3a6af0" stroke-width="1.2" fill="none"/><rect x="4" y="4" width="7" height="9" fill="#4a6ef0"/><rect x="5" y="5" width="1" height="1" fill="#8aa8f8"/><rect x="5" y="8" width="1" height="1" fill="#8aa8f8"/><rect x="9" y="5" width="1" height="1" fill="#8aa8f8"/>
<circle cx="11.5" cy="11.5" r="3.3" fill="#333"/>
<path d="M24,1 V11.5 H31 V5 H21" stroke="#3a6af0" stroke-width="1.2" fill="none"/><circle cx="31.5" cy="11.5" r="3.3" fill="#333"/>
<text x="42.5" y="13" font-family="Liberation Sans" font-style="italic" font-size="15" fill="#333">fx</text>
<rect x="62" y="7" width="2" height="2" fill="#333"/><rect x="67" y="7" width="2" height="2" fill="#333"/><rect x="72" y="7" width="2" height="2" fill="#333"/>
</svg>
<svg style="left:591px;top:71px" width="32" height="21">
<rect x="0" y="0" width="31" height="21" fill="#151515"/>
<polygon points="0,0 5,0 0,5" fill="#0018ff"/><polygon points="26,0 31,0 31,5" fill="#0018ff"/>
<polygon points="1,6 6,1 26,1 31,6 31,21 1,21" fill="#fdc97b"/>
<line x1="1" y1="6" x2="6" y2="1" stroke="#eee" stroke-width="0.9"/><line x1="26" y1="1" x2="31" y2="6" stroke="#eee" stroke-width="0.9"/>
<polygon points="8,1 22,1 19,4 11,4" fill="#0018ff"/><polyline points="7,1 11,4.5 19,4.5 23,1" stroke="#999" stroke-width="0.8" fill="none"/>
<polygon points="1,17 1,21 5,21" fill="#fff"/>
<rect x="5" y="19" width="6" height="2" fill="#777"/>
<text x="3" y="15.5" font-family="Liberation Sans" font-size="11" fill="#4a3a2a" letter-spacing="-0.5">VI</text>
<rect x="15" y="9" width="2" height="2" fill="#333"/><rect x="20" y="9" width="2" height="2" fill="#333"/><rect x="25" y="9" width="2" height="2" fill="#333"/>
</svg>
<svg style="left:296px;top:94px" width="531" height="22"><rect x="0" y="0" width="525" height="22" fill="url(#ocon)"/><polygon points="0,0 8,0 0,8" fill="#222"/><polygon points="6,2 86,2 86,18 0,18 0,8" fill="#f9a57b"/><line x1="0" y1="8" x2="6" y2="2" stroke="#ddd" stroke-width="0.8"/><polygon points="470,1 525,1 530,6 530,19 470,19" fill="#f9a57b"/><polygon points="0,15 0,21 5,21" fill="#fff"/><line x1="1" y1="20" x2="8" y2="1" stroke="#1020ff" stroke-width="1"/><rect x="8" y="1" width="1" height="19" fill="#222"/><path d="M258,0 L261,3 H273 L276,0 Z" fill="#0018ff"/><polyline points="257,0 261,3.5 273,3.5 277,0" stroke="#aaa" stroke-width="0.8" fill="none"/><path d="M477,5 V13 H486 V7 H475 M479,3 V5" stroke="#3a6af0" stroke-width="1" fill="none"/><circle cx="486" cy="14" r="3" fill="#333"/><text x="497" y="14" font-family="Liberation Sans" font-style="italic" font-size="13" fill="#333">fx</text><rect x="514" y="9" width="2" height="2" fill="#333"/><rect x="519" y="9" width="2" height="2" fill="#333"/><rect x="524" y="9" width="2" height="2" fill="#333"/></svg>
<span class="t" style="left:298px;top:100px;font-size:11px;color:#3a3038;">esteban-ocon-31</span>
<svg style="left:296px;top:117px" width="531" height="22"><rect x="0" y="0" width="525" height="22" fill="url(#p2)"/><polygon points="0,0 8,0 0,8" fill="#222"/><polygon points="6,2 197,2 197,18 0,18 0,8" fill="#f77a70"/><line x1="0" y1="8" x2="6" y2="2" stroke="#ddd" stroke-width="0.8"/><polygon points="470,1 525,1 530,6 530,19 470,19" fill="#f77a70"/><polygon points="0,15 0,21 5,21" fill="#fff"/><line x1="1" y1="20" x2="8" y2="1" stroke="#1020ff" stroke-width="1"/><rect x="8" y="1" width="1" height="19" fill="#222"/><path d="M258,0 L261,3 H273 L276,0 Z" fill="#0018ff"/><polyline points="257,0 261,3.5 273,3.5 277,0" stroke="#aaa" stroke-width="0.8" fill="none"/><path d="M477,5 V13 H486 V7 H475 M479,3 V5" stroke="#3a6af0" stroke-width="1" fill="none"/><circle cx="486" cy="14" r="3" fill="#333"/><text x="497" y="14" font-family="Liberation Sans" font-style="italic" font-size="13" fill="#333">fx</text><rect x="514" y="9" width="2" height="2" fill="#333"/><rect x="519" y="9" width="2" height="2" fill="#333"/><rect x="524" y="9" width="2" height="2" fill="#333"/></svg>
<span class="t" style="left:298px;top:123px;font-size:11px;color:#3a3038;">6d1a32dd0bd08377155bd30e0b437048</span>
<svg width="0" height="0" style="left:0;top:0"><defs>
<pattern id="crowd" width="6" height="5" patternUnits="userSpaceOnUse"><rect width="6" height="5" fill="#2e2a2c"/><rect x="0" y="0" width="1" height="1" fill="#8a5a3a"/><rect x="3" y="1" width="1" height="1" fill="#c8a070"/><rect x="1" y="3" width="1" height="1" fill="#5a5a6a"/><rect x="4" y="3" width="1" height="1" fill="#a04030"/><rect x="2" y="2" width="1" height="1" fill="#1a1a1a"/><rect x="5" y="4" width="1" height="1" fill="#7a7a7a"/></pattern>
<pattern id="driver" width="27" height="84" patternUnits="userSpaceOnUse">
 <rect width="27" height="84" fill="#121218"/><rect x="0" y="14" width="27" height="28" fill="#e8a4cc"/>
 <rect x="6" y="14" width="16" height="5" fill="#2a201c"/><ellipse cx="14" cy="25" rx="7" ry="9" fill="#9a7866"/><rect x="8" y="28" width="12" height="6" fill="#7a5a4a"/>
 <path d="M0,84 V40 Q8,32 14,34 Q22,34 27,40 V84 Z" fill="#15151c"/>
 <path d="M0,44 L8,38 L10,46 L2,54 Z" fill="#2a5ab8"/><rect x="18" y="44" width="6" height="6" fill="#3a4a9a"/><rect x="14" y="50" width="12" height="6" fill="#e0e0f0"/>
 <rect x="2" y="62" width="10" height="4" fill="#f4f4f4"/><rect x="13" y="62" width="13" height="4" fill="#eeeeee"/><rect x="8" y="70" width="18" height="5" fill="#cccccc"/><rect x="20" y="57" width="6" height="4" fill="#c04a6a"/>
</pattern>
</defs></svg>
<div style="left:822px;top:141px;width:27px;height:82px;background:url(#x);overflow:hidden"><svg width="27" height="82"><rect width="27" height="82" fill="url(#driver)"/></svg></div>
<svg style="left:849px;top:141px" width="128" height="82" viewBox="0 0 128 82" preserveAspectRatio="none"><rect width="128" height="82" fill="#34422a"/><rect x="0" y="0" width="128" height="16" fill="#2a3424"/><ellipse cx="20" cy="26" rx="18" ry="14" fill="#37462b"/><ellipse cx="18" cy="64" rx="22" ry="16" fill="#303f26"/><ellipse cx="28" cy="50" rx="10" ry="8" fill="#3a4c2e"/><polygon points="50,16 128,14 128,60 52,22" fill="url(#crowd)"/><polygon points="52,22 128,60 128,66 50,26" fill="#8c9094"/><polygon points="50,26 128,66 128,78 47,28" fill="#6a9a3c"/><polygon points="40,30 47,28 128,78 128,82 78,82" fill="#76787a"/><line x1="40" y1="30" x2="78" y2="82" stroke="#d8d8d8" stroke-width="0.9"/><line x1="47" y1="28" x2="128" y2="78" stroke="#d8d8d8" stroke-width="0.9"/><polygon points="30,36 40,30 78,82 52,82" fill="#4a6a30"/><polygon points="60,50 70,50 100,82 80,82" fill="#5a5c5e" opacity="0.6"/><rect x="66" y="40" width="5" height="3" fill="#1a1a22"/><rect x="80" y="58" width="7" height="4" fill="#1a1a26"/><rect x="50" y="34" width="5" height="3" fill="#222"/></svg>
<svg style="left:977px;top:141px" width="129" height="82" viewBox="0 0 129 82" preserveAspectRatio="none"><rect width="129" height="82" fill="#55575c"/><rect x="0" y="0" width="129" height="16" fill="#2c3028"/><rect x="8" y="1" width="9" height="4" fill="#f0f0f0"/><rect x="18" y="1" width="14" height="4" fill="#d82a1a"/><rect x="12" y="7" width="20" height="8" fill="#9a9aa0"/><rect x="38" y="4" width="14" height="6" fill="#c8a848"/><rect x="100" y="4" width="14" height="6" fill="#8a7a7a"/><rect x="60" y="13" width="69" height="6" fill="#dcc01c"/><rect x="0" y="16" width="90" height="10" fill="#dcc21e"/><rect x="2" y="19" width="6" height="4" fill="#b83a1a"/><rect x="17" y="19" width="12" height="4" fill="#b83a1a"/><rect x="40" y="19" width="10" height="4" fill="#b83a1a"/><rect x="60" y="19" width="8" height="4" fill="#c8902a"/><rect x="72" y="19" width="10" height="4" fill="#c8902a"/><rect x="92" y="15" width="8" height="3" fill="#b83a1a"/><rect x="110" y="15" width="8" height="3" fill="#b83a1a"/><rect x="0" y="26" width="129" height="4" fill="#a8a8a8"/><rect x="0" y="30" width="129" height="35" fill="#56585d"/><path d="M129,30 Q96,32 88,40 Q92,50 129,54 Z" fill="#4a4c52"/><path d="M129,31 Q96,33 88,40 Q92,50 129,53" stroke="#e8d0a0" stroke-width="4.5" fill="none"/><path d="M129,31 Q96,33 88,40 Q92,50 129,53" stroke="#d83a2a" stroke-width="4.5" stroke-dasharray="4,4" fill="none"/><path d="M129,28.5 Q94,30 85.5,40 Q90,52 129,55.5" stroke="#e0b828" stroke-width="1.5" fill="none"/><rect x="44" y="24" width="16" height="12" rx="2" fill="#1a1a20"/><rect x="50" y="26" width="4" height="7" fill="#e8e8e8"/><rect x="60" y="27" width="25" height="15" rx="2" fill="#1c2238"/><rect x="66" y="29" width="12" height="8" fill="#4a68c8"/><rect x="62" y="40" width="20" height="2" fill="#6a7ad8"/><polygon points="0,57 72,66 74,82 0,82" fill="#a8a6a0"/><line x1="0" y1="57" x2="72" y2="66" stroke="#d8e0e8" stroke-width="1.2"/><rect x="37" y="73" width="34" height="8" fill="#0c1620"/><rect x="42" y="75" width="8" height="3" fill="#3a8ad8"/></svg>
<div style="left:822px;top:226px;width:27px;height:60px;overflow:hidden"><svg width="27" height="60" viewBox="0 0 27 84" preserveAspectRatio="none"><rect width="27" height="84" fill="url(#driver)"/></svg></div>
<svg style="left:849px;top:226px" width="86" height="60" viewBox="0 0 128 82" preserveAspectRatio="none"><rect width="128" height="82" fill="#34422a"/><rect x="0" y="0" width="128" height="16" fill="#2a3424"/><ellipse cx="20" cy="26" rx="18" ry="14" fill="#37462b"/><ellipse cx="18" cy="64" rx="22" ry="16" fill="#303f26"/><ellipse cx="28" cy="50" rx="10" ry="8" fill="#3a4c2e"/><polygon points="50,16 128,14 128,60 52,22" fill="url(#crowd)"/><polygon points="52,22 128,60 128,66 50,26" fill="#8c9094"/><polygon points="50,26 128,66 128,78 47,28" fill="#6a9a3c"/><polygon points="40,30 47,28 128,78 128,82 78,82" fill="#76787a"/><line x1="40" y1="30" x2="78" y2="82" stroke="#d8d8d8" stroke-width="0.9"/><line x1="47" y1="28" x2="128" y2="78" stroke="#d8d8d8" stroke-width="0.9"/><polygon points="30,36 40,30 78,82 52,82" fill="#4a6a30"/><polygon points="60,50 70,50 100,82 80,82" fill="#5a5c5e" opacity="0.6"/><rect x="66" y="40" width="5" height="3" fill="#1a1a22"/><rect x="80" y="58" width="7" height="4" fill="#1a1a26"/><rect x="50" y="34" width="5" height="3" fill="#222"/></svg>
<svg style="left:935px;top:226px" width="85" height="60" viewBox="0 0 85 60" preserveAspectRatio="none"><rect width="85" height="60" fill="#48494c"/><polygon points="0,0 32,0 36,24 0,36" fill="#22301c"/><polygon points="44,0 85,0 85,14 56,8" fill="url(#crowd)"/><path d="M28,0 H42 Q50,28 10,42 L0,44 V36 Q36,26 28,0 Z" fill="#a4a4a4"/><path d="M0,40 Q40,32 36,8" stroke="#dcb820" stroke-width="2.6" fill="none"/><path d="M0,41 Q41,33 37,9" stroke="#c83a2a" stroke-width="0.9" stroke-dasharray="2,3" fill="none"/><path d="M42,0 Q52,28 0,46 V60 H85 V40 Q64,14 56,0 Z" fill="#4a4b50"/><polygon points="56,0 66,0 85,22 85,40" fill="#5a7a3a"/><path d="M56,2 Q74,18 85,40" stroke="#2aa060" stroke-width="1" fill="none"/><path d="M6,50 Q40,40 64,20" stroke="#e0e0e0" stroke-width="0.8" stroke-dasharray="1.2,4" fill="none"/><rect x="40" y="26" width="8" height="3" fill="#1a2440"/><rect x="0" y="48" width="85" height="12" fill="#2c2e32"/><rect x="0" y="47" width="30" height="1.2" fill="#c84a30"/><rect x="6" y="57" width="7" height="2" fill="#e0c020"/><rect x="44" y="46" width="8" height="4" fill="#2a9a3a"/><rect x="26" y="50" width="24" height="7" fill="#0c1218"/><rect x="58" y="49" width="24" height="7" fill="#0c1218"/></svg>
<svg style="left:1020px;top:226px" width="86" height="60" viewBox="0 0 129 82" preserveAspectRatio="none"><rect width="129" height="82" fill="#55575c"/><rect x="0" y="0" width="129" height="16" fill="#2c3028"/><rect x="8" y="1" width="9" height="4" fill="#f0f0f0"/><rect x="18" y="1" width="14" height="4" fill="#d82a1a"/><rect x="12" y="7" width="20" height="8" fill="#9a9aa0"/><rect x="38" y="4" width="14" height="6" fill="#c8a848"/><rect x="100" y="4" width="14" height="6" fill="#8a7a7a"/><rect x="60" y="13" width="69" height="6" fill="#dcc01c"/><rect x="0" y="16" width="90" height="10" fill="#dcc21e"/><rect x="2" y="19" width="6" height="4" fill="#b83a1a"/><rect x="17" y="19" width="12" height="4" fill="#b83a1a"/><rect x="40" y="19" width="10" height="4" fill="#b83a1a"/><rect x="60" y="19" width="8" height="4" fill="#c8902a"/><rect x="72" y="19" width="10" height="4" fill="#c8902a"/><rect x="92" y="15" width="8" height="3" fill="#b83a1a"/><rect x="110" y="15" width="8" height="3" fill="#b83a1a"/><rect x="0" y="26" width="129" height="4" fill="#a8a8a8"/><rect x="0" y="30" width="129" height="35" fill="#56585d"/><path d="M129,30 Q96,32 88,40 Q92,50 129,54 Z" fill="#4a4c52"/><path d="M129,31 Q96,33 88,40 Q92,50 129,53" stroke="#e8d0a0" stroke-width="4.5" fill="none"/><path d="M129,31 Q96,33 88,40 Q92,50 129,53" stroke="#d83a2a" stroke-width="4.5" stroke-dasharray="4,4" fill="none"/><path d="M129,28.5 Q94,30 85.5,40 Q90,52 129,55.5" stroke="#e0b828" stroke-width="1.5" fill="none"/><rect x="44" y="24" width="16" height="12" rx="2" fill="#1a1a20"/><rect x="50" y="26" width="4" height="7" fill="#e8e8e8"/><rect x="60" y="27" width="25" height="15" rx="2" fill="#1c2238"/><rect x="66" y="29" width="12" height="8" fill="#4a68c8"/><rect x="62" y="40" width="20" height="2" fill="#6a7ad8"/><polygon points="0,57 72,66 74,82 0,82" fill="#a8a6a0"/><line x1="0" y1="57" x2="72" y2="66" stroke="#d8e0e8" stroke-width="1.2"/><rect x="37" y="73" width="34" height="8" fill="#0c1620"/><rect x="42" y="75" width="8" height="3" fill="#3a8ad8"/></svg>
<div style="left:822px;top:143px;width:26px;height:15px;background:#7b6ba6;overflow:hidden"></div>
<span class="t" style="left:824px;top:146px;font-size:11px;color:#e4e4ec;">2023</span>
<div style="left:850px;top:143px;width:107px;height:15px;background:#7b6ba6"></div>
<span class="t" style="left:853px;top:146px;font-size:11px;color:#e8e8f0;">2023-08-03 17-53-35</span>
<div style="left:852px;top:168px;width:35px;height:12px;background:#e8100e"></div>
<span class="t" style="left:854px;top:169px;font-size:11px;color:#ffffff;">-28;13</span>
<svg style="left:1046px;top:202px" width="61" height="21"><rect width="61" height="21" fill="#7b6ba6"/><path d="M9,4 V15 H18 V7 H6 M9,2 V4 M18,15 V18" stroke="#d8d8d8" stroke-width="1.2" fill="none"/><rect x="20" y="14" width="2" height="1.2" fill="#d8d8d8"/><text x="29" y="15" font-family="Liberation Sans" font-style="italic" font-size="14" fill="#d8d8d8">fx</text><rect x="47" y="10" width="2" height="2" fill="#ddd"/><rect x="52" y="10" width="2" height="2" fill="#ddd"/><rect x="57" y="10" width="2" height="2" fill="#ddd"/></svg>
<svg style="left:821px;top:140px" width="290" height="84"><polygon points="0,0 5,0 0,5" fill="#222"/><line x1="0" y1="5" x2="5" y2="0" stroke="#ddd"/><polygon points="0,79 0,84 5,84" fill="#fff"/><polygon points="22,0 28,0 28,6" fill="#f08010"/><polygon points="28,0 34,0 28,6" fill="#0018ff"/><line x1="22" y1="0" x2="28" y2="6" stroke="#ddd"/><line x1="34" y1="0" x2="28" y2="6" stroke="#ddd"/><polygon points="28,79 28,84 33,84" fill="#fff"/><line x1="1" y1="82" x2="27" y2="1" stroke="#1030ff" stroke-width="1"/><path d="M148,0 L151,3.5 H161 L164,0 Z" fill="#0018ff"/><polyline points="147,0 151,4 161,4 165,0" stroke="#aaa" stroke-width="0.8" fill="none"/><polygon points="279,0 285,0 285,6" fill="#0018ff"/><line x1="279" y1="0" x2="285" y2="6" stroke="#ddd"/><rect x="286" y="1" width="2" height="82" fill="#6a6a70"/></svg>
<div style="left:822px;top:228px;width:26px;height:15px;background:#7b6ba6;overflow:hidden"></div>
<span class="t" style="left:824px;top:231px;font-size:11px;color:#e4e4ec;">2023</span>
<div style="left:850px;top:228px;width:107px;height:15px;background:#7b6ba6"></div>
<span class="t" style="left:853px;top:231px;font-size:11px;color:#e8e8f0;">2023-08-03 17-53-35</span>
<div style="left:852px;top:243px;width:35px;height:12px;background:#e8100e"></div>
<span class="t" style="left:854px;top:244px;font-size:11px;color:#ffffff;">-28;13</span>
<svg style="left:1046px;top:265px" width="61" height="21"><rect width="61" height="21" fill="#7b6ba6"/><path d="M9,4 V15 H18 V7 H6 M9,2 V4 M18,15 V18" stroke="#d8d8d8" stroke-width="1.2" fill="none"/><rect x="20" y="14" width="2" height="1.2" fill="#d8d8d8"/><text x="29" y="15" font-family="Liberation Sans" font-style="italic" font-size="14" fill="#d8d8d8">fx</text><rect x="47" y="10" width="2" height="2" fill="#ddd"/><rect x="52" y="10" width="2" height="2" fill="#ddd"/><rect x="57" y="10" width="2" height="2" fill="#ddd"/></svg>
<svg style="left:821px;top:225px" width="290" height="62"><polygon points="0,0 5,0 0,5" fill="#222"/><line x1="0" y1="5" x2="5" y2="0" stroke="#ddd"/><polygon points="0,57 0,62 5,62" fill="#fff"/><polygon points="22,0 28,0 28,6" fill="#f08010"/><polygon points="28,0 34,0 28,6" fill="#0018ff"/><line x1="22" y1="0" x2="28" y2="6" stroke="#ddd"/><line x1="34" y1="0" x2="28" y2="6" stroke="#ddd"/><polygon points="28,57 28,62 33,62" fill="#fff"/><line x1="1" y1="60" x2="27" y2="1" stroke="#1030ff" stroke-width="1"/><path d="M148,0 L151,3.5 H161 L164,0 Z" fill="#0018ff"/><polyline points="147,0 151,4 161,4 165,0" stroke="#aaa" stroke-width="0.8" fill="none"/><polygon points="279,0 285,0 285,6" fill="#0018ff"/><line x1="279" y1="0" x2="285" y2="6" stroke="#ddd"/><rect x="286" y="1" width="2" height="60" fill="#6a6a70"/></svg>
<svg style="left:296px;top:297px" width="539" height="21"><rect x="0" y="0" width="539" height="21" fill="url(#onb1)"/><polygon points="5,1 107,1 107,18 0,18 0,6" fill="#7b6ba6"/><rect x="479" y="0" width="60" height="20" fill="#7b6ba6"/><path d="M485,5 V14 H494 V7 H482 M485,2 V5 M494,14 V17" stroke="#d8d8d8" stroke-width="1.2" fill="none"/><rect x="496" y="13" width="2" height="1.2" fill="#d8d8d8"/><text x="504" y="15" font-family="Liberation Sans" font-style="italic" font-size="14" fill="#d8d8d8">fx</text><rect x="524" y="9" width="2" height="2" fill="#d8d8d8"/><rect x="529" y="9" width="2" height="2" fill="#d8d8d8"/><rect x="534" y="9" width="2" height="2" fill="#d8d8d8"/><polygon points="0,0 4,0 0,4" fill="#0018ff"/><line x1="0" y1="6" x2="5" y2="1" stroke="#ddd"/><polygon points="0,16 0,21 5,21" fill="#fff"/><polygon points="534,0 539,0 539,5" fill="#0018ff"/><line x1="533" y1="0" x2="539" y2="6" stroke="#ddd"/><path d="M262,0 L265.5,3.5 H273.5 L277,0 Z" fill="#0018ff"/><polyline points="261.5,0 265.5,4 273.5,4 277.5,0" stroke="#aaa" stroke-width="0.8" fill="none"/></svg>
<span class="t" style="left:299px;top:303px;font-size:11px;color:#e8e8f0;">2023-08-02 20-45-36</span>
<svg style="left:296px;top:320px" width="539" height="21"><rect x="0" y="0" width="539" height="21" fill="url(#onb1)"/><polygon points="5,1 107,1 107,18 0,18 0,6" fill="#7b6ba6"/><rect x="479" y="0" width="60" height="20" fill="#7b6ba6"/><path d="M485,5 V14 H494 V7 H482 M485,2 V5 M494,14 V17" stroke="#d8d8d8" stroke-width="1.2" fill="none"/><rect x="496" y="13" width="2" height="1.2" fill="#d8d8d8"/><text x="504" y="15" font-family="Liberation Sans" font-style="italic" font-size="14" fill="#d8d8d8">fx</text><rect x="524" y="9" width="2" height="2" fill="#d8d8d8"/><rect x="529" y="9" width="2" height="2" fill="#d8d8d8"/><rect x="534" y="9" width="2" height="2" fill="#d8d8d8"/><polygon points="0,0 4,0 0,4" fill="#0018ff"/><line x1="0" y1="6" x2="5" y2="1" stroke="#ddd"/><polygon points="0,16 0,21 5,21" fill="#fff"/><polygon points="534,0 539,0 539,5" fill="#0018ff"/><line x1="533" y1="0" x2="539" y2="6" stroke="#ddd"/><path d="M262,0 L265.5,3.5 H273.5 L277,0 Z" fill="#0018ff"/><polyline points="261.5,0 265.5,4 273.5,4 277.5,0" stroke="#aaa" stroke-width="0.8" fill="none"/></svg>
<span class="t" style="left:299px;top:326px;font-size:11px;color:#e8e8f0;">2023-08-02 20-45-36</span>
<svg style="left:296px;top:343px" width="539" height="21"><polygon points="5,0 533,0 539,6 539,20 0,20 0,5" fill="#c8848f"/><rect x="107" y="5" width="393" height="1" fill="#eadcdc"/><rect x="107" y="10" width="393" height="1" fill="#5a4a4a"/><rect x="107" y="16" width="393" height="1" fill="#eadcdc"/><text x="504" y="15" font-family="Liberation Sans" font-style="italic" font-size="14" fill="#dccdd0">fx</text><rect x="524" y="9" width="2" height="2" fill="#eee"/><rect x="529" y="9" width="2" height="2" fill="#eee"/><rect x="534" y="9" width="2" height="2" fill="#eee"/><polygon points="0,0 4,0 0,4" fill="#f08010"/><line x1="0" y1="6" x2="5" y2="1" stroke="#ddd"/><polygon points="0,16 0,21 5,21" fill="#fff"/><polygon points="534,0 539,0 539,5" fill="#f08010"/><line x1="533" y1="0" x2="539" y2="6" stroke="#ddd"/><path d="M262,0 L265.5,3.5 H273.5 L277,0 Z" fill="#0018ff"/><polyline points="261.5,0 265.5,4 273.5,4 277.5,0" stroke="#aaa" stroke-width="0.8" fill="none"/></svg>
<span class="t" style="left:299px;top:349px;font-size:11px;color:#eee4e4;">2023-08-02 20-45-36</span>
<svg style="left:296px;top:366px" width="539" height="21"><rect x="0" y="0" width="539" height="21" fill="url(#onb2)"/><polygon points="5,1 107,1 107,18 0,18 0,6" fill="#f77b72"/><rect x="479" y="0" width="60" height="20" fill="#f77b72"/><path d="M485,5 V14 H494 V7 H482 M485,2 V5 M494,14 V17" stroke="#333" stroke-width="1.2" fill="none"/><rect x="496" y="13" width="2" height="1.2" fill="#333"/><text x="504" y="15" font-family="Liberation Sans" font-style="italic" font-size="14" fill="#333">fx</text><rect x="524" y="9" width="2" height="2" fill="#333"/><rect x="529" y="9" width="2" height="2" fill="#333"/><rect x="534" y="9" width="2" height="2" fill="#333"/><polygon points="0,0 4,0 0,4" fill="#0018ff"/><line x1="0" y1="6" x2="5" y2="1" stroke="#ddd"/><polygon points="0,16 0,21 5,21" fill="#fff"/><polygon points="534,0 539,0 539,5" fill="#0018ff"/><line x1="533" y1="0" x2="539" y2="6" stroke="#ddd"/><path d="M262,0 L265.5,3.5 H273.5 L277,0 Z" fill="#0018ff"/><polyline points="261.5,0 265.5,4 273.5,4 277.5,0" stroke="#aaa" stroke-width="0.8" fill="none"/></svg>
<span class="t" style="left:299px;top:372px;font-size:11px;color:#3a3038;">2023-08-02 20-46-44</span>
<svg style="left:296px;top:389px" width="539" height="21"><rect x="0" y="0" width="539" height="21" fill="url(#onb2)"/><polygon points="5,1 107,1 107,18 0,18 0,6" fill="#f77b72"/><rect x="479" y="0" width="60" height="20" fill="#f77b72"/><path d="M485,5 V14 H494 V7 H482 M485,2 V5 M494,14 V17" stroke="#333" stroke-width="1.2" fill="none"/><rect x="496" y="13" width="2" height="1.2" fill="#333"/><text x="504" y="15" font-family="Liberation Sans" font-style="italic" font-size="14" fill="#333">fx</text><rect x="524" y="9" width="2" height="2" fill="#333"/><rect x="529" y="9" width="2" height="2" fill="#333"/><rect x="534" y="9" width="2" height="2" fill="#333"/><polygon points="0,0 4,0 0,4" fill="#0018ff"/><line x1="0" y1="6" x2="5" y2="1" stroke="#ddd"/><polygon points="0,16 0,21 5,21" fill="#fff"/><polygon points="534,0 539,0 539,5" fill="#0018ff"/><line x1="533" y1="0" x2="539" y2="6" stroke="#ddd"/><path d="M262,0 L265.5,3.5 H273.5 L277,0 Z" fill="#0018ff"/><polyline points="261.5,0 265.5,4 273.5,4 277.5,0" stroke="#aaa" stroke-width="0.8" fill="none"/></svg>
<span class="t" style="left:299px;top:395px;font-size:11px;color:#3a3038;">2023-08-02 20-46-44</span>
<svg style="left:296px;top:412px" width="539" height="21"><polygon points="5,0 533,0 539,6 539,20 0,20 0,5" fill="#f9a57b"/><rect x="107" y="5" width="393" height="1" fill="#6a4a3a"/><rect x="107" y="10" width="393" height="1" fill="#6a4a3a"/><rect x="107" y="16" width="393" height="1" fill="#6a4a3a"/><ellipse cx="303" cy="5.5" rx="5" ry="2" fill="#7a5a4a"/><ellipse cx="303" cy="16" rx="6" ry="2" fill="#7a5a4a"/><text x="504" y="15" font-family="Liberation Sans" font-style="italic" font-size="14" fill="#333">fx</text><rect x="524" y="9" width="2" height="2" fill="#333"/><rect x="529" y="9" width="2" height="2" fill="#333"/><rect x="534" y="9" width="2" height="2" fill="#333"/><polygon points="0,0 4,0 0,4" fill="#f08010"/><line x1="0" y1="6" x2="5" y2="1" stroke="#ddd"/><polygon points="0,16 0,21 5,21" fill="#fff"/><polygon points="534,0 539,0 539,5" fill="#f08010"/><line x1="533" y1="0" x2="539" y2="6" stroke="#ddd"/><path d="M262,0 L265.5,3.5 H273.5 L277,0 Z" fill="#0018ff"/><polyline points="261.5,0 265.5,4 273.5,4 277.5,0" stroke="#aaa" stroke-width="0.8" fill="none"/></svg>
<span class="t" style="left:299px;top:418px;font-size:11px;color:#3a3038;">2023-08-02 20-46-44</span>
<svg style="left:694px;top:435px" width="230" height="21"><polygon points="6,0 224,0 230,6 230,20 6,20 0,14 0,6" fill="#4b80a0"/><rect x="106" y="4" width="82" height="2" fill="#c8d4dc" opacity="0.85"/><rect x="106" y="10" width="82" height="1" fill="#4a5a64"/><rect x="106" y="15" width="82" height="2" fill="#c8d4dc" opacity="0.85"/><rect x="106" y="3" width="82" height="4" fill="url(#wfn)"/><rect x="106" y="14" width="82" height="4" fill="url(#wfn)"/><text x="193" y="15" font-family="Liberation Sans" font-style="italic" font-size="14" fill="#cfdde6">fx</text><rect x="213" y="9" width="2" height="2" fill="#ddd"/><rect x="218" y="9" width="2" height="2" fill="#ddd"/><rect x="223" y="9" width="2" height="2" fill="#ddd"/><polygon points="0,0 5,0 0,5" fill="#f08010"/><polygon points="0,14 0,20 5,20" fill="#fff"/><polygon points="225,0 230,0 230,5" fill="#f08010"/><line x1="224" y1="0" x2="230" y2="6" stroke="#ddd"/><path d="M107,0 L110.5,3.5 H118.5 L122,0 Z" fill="#0018ff"/><polyline points="106.5,0 110.5,4 118.5,4 122.5,0" stroke="#aaa" stroke-width="0.8" fill="none"/></svg>
<span class="t" style="left:697px;top:441px;font-size:11px;color:#e4eef2;">2023-08-03 17-51-32</span>
<svg style="left:924px;top:435px" width="182" height="21"><polygon points="6,0 176,0 182,6 182,20 6,20 0,14 0,6" fill="#4b80a0"/><rect x="106" y="1" width="37" height="19" fill="#5c6070"/><rect x="0" y="0" width="182" height="1" fill="#8a7aa8"/><rect x="0" y="20" width="182" height="1" fill="#8a7aa8"/><rect x="0" y="6" width="2" height="9" fill="#1830ff"/><rect x="106" y="4" width="37" height="2" fill="#c8d4dc" opacity="0.85"/><rect x="106" y="10" width="37" height="1" fill="#4a5a64"/><rect x="106" y="15" width="37" height="2" fill="#c8d4dc" opacity="0.85"/><rect x="106" y="3" width="37" height="4" fill="url(#wfn)"/><rect x="106" y="14" width="37" height="4" fill="url(#wfn)"/><text x="145" y="15" font-family="Liberation Sans" font-style="italic" font-size="14" fill="#cfdde6">fx</text><rect x="165" y="9" width="2" height="2" fill="#ddd"/><rect x="170" y="9" width="2" height="2" fill="#ddd"/><rect x="175" y="9" width="2" height="2" fill="#ddd"/><polygon points="0,0 5,0 0,5" fill="#f08010"/><polygon points="0,14 0,20 5,20" fill="#fff"/><polygon points="177,0 182,0 182,5" fill="#f08010"/><line x1="176" y1="0" x2="182" y2="6" stroke="#ddd"/><path d="M85,0 L88.5,3.5 H96.5 L100,0 Z" fill="#0018ff"/><polyline points="84.5,0 88.5,4 96.5,4 100.5,0" stroke="#aaa" stroke-width="0.8" fill="none"/></svg>
<span class="t" style="left:927px;top:441px;font-size:11px;color:#e4eef2;">2023-08-03 17-53-35</span>
<div style="left:352px;top:458px;width:755px;height:9px;overflow:hidden"><svg style="position:absolute;left:0;top:0" width="755" height="9"><polygon points="7,0 749,0 755,6 755,9 0,9 0,7" fill="#f77b72"/><rect x="9" y="0" width="62" height="1" fill="#333" opacity="0.6"/><rect x="71" y="0" width="1.5" height="9" fill="#2a2a2a"/><line x1="0" y1="7" x2="7" y2="0" stroke="#ddd" stroke-width="0.8"/></svg><span class="t" style="left:8px;top:6px;font-size:11px;color:#3a2a30">[YTP - Bi [-]]</span><div style="position:absolute;left:78px;top:0;width:440px;height:9px;overflow:hidden"><span class="t" style="left:2px;top:6.5px;font-size:11px;color:#3a2a30;letter-spacing:0.45px">Alexander Bob - Fairytale (Alexander TikTok Remix) Sh ... Chill [Fight Song] (2021) - )</span></div><svg style="position:absolute;left:0;top:0" width="755" height="9"><rect x="520" y="5" width="195" height="1" fill="#6a4440"/><rect x="727" y="1" width="1" height="8" fill="#2a2a2a"/><line x1="748" y1="0" x2="755" y2="7" stroke="#eee" stroke-width="0.9"/><text x="720" y="16" font-family="Liberation Sans" font-style="italic" font-size="15" fill="#333">fx</text></svg></div>
<div style="left:818px;top:47px;width:1px;height:420px;background:#f4f4f4"></div>
<svg style="left:811px;top:31px" width="14" height="16"><polygon points="1,1 13,1 13,10 7,15.5 1,10" fill="#d0d0d0"/><rect x="4" y="4" width="2" height="5" fill="#1a1a1a"/><rect x="8" y="4" width="2" height="5" fill="#1a1a1a"/></svg>
<div style="left:797px;top:0px;width:28px;height:11px;background:#e0e0e0;border:1px solid #0a0a0a;box-sizing:border-box"></div>
<span class="t" style="left:800px;top:1px;font-size:9.5px;color:#333;letter-spacing:-0.3px">-0;13</span>
<svg style="left:827px;top:1px" width="10" height="8"><rect x="0" y="0" width="1.5" height="7" fill="#1e90f0"/><polygon points="2,3.5 5.5,0.3 5.5,6.7" fill="#1e90f0"/><rect x="5" y="2.7" width="3.5" height="1.8" fill="#1e90f0"/></svg>
<div style="left:0px;top:467px;width:290px;height:51px;background:#222222;"></div>
<span class="t" style="left:3px;top:489px;font-size:11px;color:#e0e0d8;">Rate: 0,00</span>
<div style="left:86px;top:496px;width:186px;height:2px;background:#0e0e0e;"></div>
<div class="knob" style="left:171px;top:490px"><i></i><i></i></div>
<svg style="left:191px;top:504px" width="10" height="6"><polygon points="0,5 4.5,0 9,5" fill="#eee"/></svg>
<div style="left:295px;top:467px;width:2243px;height:17px;background:#1a1a1a;"></div>
<div style="left:295px;top:468px;width:18px;height:16px;background:#2b2b2b;"></div>
<div style="left:313px;top:468px;width:2167px;height:16px;background:#474747;"></div>
<div style="left:2480px;top:468px;width:18px;height:16px;background:#2b2b2b;"></div>
<div style="left:2498px;top:468px;width:56px;height:16px;background:#333333;"></div>
<div style="left:295px;top:484px;width:2259px;height:34px;background:#222222;"></div>
<div style="left:295px;top:484px;width:2259px;height:1px;background:#151515;"></div>
<div style="left:0px;top:517px;width:2554px;height:1px;background:#101010;"></div>
<svg style="left:300px;top:471px" width="8" height="10"><polygon points="6,0 6,9 1,4.5" fill="#d0d0d0"/></svg>
<div style="left:319px;top:471px;width:1px;height:10px;background:#2a2a2a"></div>
<div style="left:2472px;top:471px;width:1px;height:10px;background:#2a2a2a"></div>
<svg style="left:2486px;top:471px" width="8" height="10"><polygon points="1,0 1,9 6,4.5" fill="#d0d0d0"/></svg>
<svg style="left:2501px;top:470px" width="53" height="12"><rect x="2" y="5" width="7" height="1.8" fill="#e0e0e0"/><rect x="4.6" y="2.4" width="1.8" height="7" fill="#e0e0e0"/><rect x="25" y="5" width="6" height="1.8" fill="#e0e0e0"/><circle cx="43" cy="5" r="3" stroke="#e0e0e0" stroke-width="1.2" fill="none"/><line x1="45" y1="7" x2="47.5" y2="9.5" stroke="#e0e0e0" stroke-width="1.5"/></svg>
<svg style="left:295px;top:484px" width="920" height="34"><circle cx="14" cy="17" r="7" fill="#e84e3c"/><path d="M38.6,13 H36.7 A3.9,3.9 0 0 0 36.7,20.8 H43.2 A3.9,3.9 0 0 0 43.2,13 H41.4" stroke="#cdcdcd" stroke-width="1.2" fill="none"/><rect x="39.4" y="11.8" width="1.2" height="3" fill="#cdcdcd"/><polyline points="40.2,17.4 36.6,20.6 39.8,24" stroke="#cdcdcd" stroke-width="1.2" fill="none"/><rect x="60" y="11" width="1.5" height="12" fill="#cdcdcd"/><polygon points="63,11 71,17 63,23" fill="#cdcdcd"/><polygon points="87,10.5 98.5,17 87,23.5" fill="#cdcdcd"/><rect x="112" y="11" width="4" height="12" fill="#cdcdcd"/><rect x="120" y="11" width="4" height="12" fill="#cdcdcd"/><rect x="138" y="11" width="12" height="12" fill="#cdcdcd"/><rect x="165" y="11" width="1.3" height="12" fill="#cdcdcd"/><polygon points="174,11 167,17 174,23" fill="#cdcdcd"/><polygon points="192,11 199,17 192,23" fill="#cdcdcd"/><rect x="200" y="11" width="1.3" height="12" fill="#cdcdcd"/><polygon points="216,17 223,11 223,23" fill="#cdcdcd"/><rect x="224" y="11" width="1" height="12" fill="#cdcdcd"/><rect x="226" y="11" width="1" height="12" fill="#cdcdcd"/><rect x="241" y="11" width="1" height="12" fill="#cdcdcd"/><rect x="243" y="11" width="1" height="12" fill="#cdcdcd"/><polygon points="245,11 252,17 245,23" fill="#cdcdcd"/><rect x="265" y="8" width="1" height="18" fill="#444"/><rect x="271" y="8" width="22" height="18" fill="#0f6fd8"/><polygon points="275,11 290,15.5 283.5,17 281,23" fill="#d0d0d0"/><polygon points="299,15 304.5,15 301.75,18.5" fill="#cdcdcd"/><rect x="316.5" y="11.5" width="4" height="4" stroke="#cdcdcd" fill="none"/><rect x="323.5" y="11.5" width="4" height="4" stroke="#cdcdcd" fill="none"/><rect x="316.5" y="18.5" width="4" height="4" stroke="#cdcdcd" fill="none"/><rect x="320.5" y="13" width="3" height="1" fill="#cdcdcd"/><rect x="318" y="15.5" width="1" height="3" fill="#cdcdcd"/><rect x="343.5" y="11.5" width="11" height="11" stroke="#cdcdcd" stroke-width="1.2" stroke-dasharray="3,2" fill="none"/><circle cx="374" cy="16" r="5.5" stroke="#cdcdcd" stroke-width="1.2" fill="none"/><line x1="378" y1="20" x2="381" y2="23" stroke="#cdcdcd" stroke-width="1.3"/><rect x="392" y="8" width="1" height="17" fill="#444"/><path d="M405,13 L413,21 M413,13 L405,21" stroke="#cdcdcd" stroke-width="1.2"/><rect x="432" y="12" width="4" height="9" fill="#555"/><rect x="430" y="9" width="1" height="15" fill="#555"/><rect x="437" y="9" width="1" height="15" fill="#555"/><path d="M428,20 L432,14 M438,20 L442,14" stroke="#444"/><rect x="454" y="12" width="8" height="8" fill="#e04a3a" opacity="0.9"/><path d="M454,16 L458,12 M454,20 L462,12 M458,20 L462,16" stroke="#222" stroke-width="0.8"/><rect x="462" y="9" width="1.2" height="15" fill="#ddd"/><rect x="463.5" y="12" width="5" height="8" fill="#cfcfcf"/><rect x="480" y="12" width="5" height="8" fill="#cfcfcf"/><rect x="485" y="9" width="1.2" height="15" fill="#ddd"/><rect x="486.5" y="12" width="8" height="8" fill="#e04a3a"/><path d="M486.5,16 L490.5,12 M486.5,20 L494.5,12 M490.5,20 L494.5,16" stroke="#222" stroke-width="0.8"/><rect x="506" y="12" width="5" height="8" fill="#cfcfcf"/><rect x="511.5" y="9" width="1.2" height="15" fill="#ddd"/><rect x="514" y="12" width="6" height="8" fill="#cfcfcf"/><rect x="532" y="12" width="3" height="8" fill="#555"/><rect x="535.5" y="9" width="1" height="15" fill="#555"/><rect x="542.5" y="9" width="1" height="15" fill="#555"/><rect x="544" y="12" width="3" height="8" fill="#555"/><path d="M536,20 L542,13" stroke="#555"/><path d="M562.5,16 V12.5 A3,3 0 0 1 568.5,12.5 V16" stroke="#cdcdcd" stroke-width="1.3" fill="none"/><rect x="560" y="15.5" width="11" height="7.5" fill="#cdcdcd"/><circle cx="565.5" cy="19" r="1" fill="#333"/><rect x="582" y="8" width="1" height="17" fill="#444"/><polygon points="594,11 604,11 604,19 597,19 594,23" fill="#f8a83a"/><polygon points="618,12 623,12 623,19 619,19 618,21" fill="#f8a83a"/><polygon points="626,12 632,12 632,21 631,19 626,19" fill="#f8a83a"/><rect x="642" y="8" width="1" height="17" fill="#444"/><rect x="648" y="8" width="22" height="18" fill="#0f6fd8"/><path d="M654,11 V17 A5,5 0 0 0 664,17 V11 H661 V17 A2,2 0 0 1 657,17 V11 Z" fill="#d4d0cc"/><rect x="655" y="12" width="1.5" height="1.5" fill="#0f6fd8"/><rect x="661.5" y="12" width="1.5" height="1.5" fill="#0f6fd8"/><rect x="674" y="8" width="22" height="18" fill="#0f6fd8"/><polygon points="679,11 691,23 679,23" fill="#d4d0cc"/><path d="M691,11 V23 M691,11 L684.5,17.5 L691,23" stroke="#d4d0cc" stroke-width="1.1" fill="none"/><rect x="704" y="12" width="3" height="10" fill="#cfcfcf"/><rect x="707" y="9" width="1.2" height="16" fill="#ddd"/><rect x="709" y="13" width="8" height="8" fill="#3a5ef0"/><path d="M716,17 H711.5 M713.3,15 L711.2,17 L713.3,19" stroke="#1a1a2a" stroke-width="1.1" fill="none"/><polygon points="727,14.5 734.5,14.5 730.75,18.5" fill="#cdcdcd"/><rect x="741" y="8" width="22" height="18" fill="#0f6fd8"/><rect x="746" y="11" width="10" height="9" fill="#3a4ef0"/><rect x="752" y="17" width="7" height="6" fill="#ddd"/><path d="M753.5,17 V15 A2,2 0 0 1 757.5,15 V17" stroke="#ddd" stroke-width="1.2" fill="none"/><rect x="772" y="11" width="6" height="5" fill="#3a5ef0"/><rect x="779.5" y="11.5" width="5" height="5" stroke="#3a5ef0" stroke-width="1" fill="none"/><rect x="774.5" y="18.5" width="4.5" height="4" stroke="#3a5ef0" stroke-width="1" fill="none"/><polygon points="777,14 787,18.5 782.5,19.5 781,24" fill="#c4c4c4"/><rect x="795" y="8" width="1" height="17" fill="#444"/><circle cx="810.3" cy="15.3" r="2.6" fill="#e84a3a"/><circle cx="807.4" cy="20.5" r="2.6" fill="#3a60f0"/><circle cx="813.5" cy="20.5" r="2.6" fill="#10d040"/><rect x="814" y="10" width="5.5" height="6.5" fill="#e4e4e4"/><rect x="815" y="11.5" width="3" height="1" fill="#333"/><rect x="815" y="13.5" width="3" height="1" fill="#333"/><rect x="829" y="8" width="1" height="17" fill="#444"/><rect x="840" y="11" width="8" height="8" fill="#4e4e4e"/><path d="M846,15 H843 M844.5,13 L842.5,15 L844.5,17" stroke="#222" stroke-width="0.9" fill="none"/><rect x="844" y="20" width="8" height="3" fill="#4e4e4e"/><rect x="866" y="11" width="8" height="3" fill="#4e4e4e"/><rect x="870" y="15" width="8" height="8" fill="#4e4e4e"/><path d="M872,15.5 V19 H876 M874.5,17.5 L876.5,19 L874.5,20.5" stroke="#222" stroke-width="0.9" fill="none"/><rect x="892" y="11" width="8" height="3" fill="#3a60f0"/><rect x="896" y="15" width="8" height="8" fill="#3a60f0"/><path d="M898,15.5 V19 H902 M900.5,17.5 L902.5,19 L900.5,20.5" stroke="#1a2a6a" stroke-width="0.9" fill="none"/><circle cx="894" cy="20.5" r="3.2" fill="#e0e0e0" stroke="#222" stroke-width="0.6"/><path d="M892.2,20.5 H895.8 M894,18.7 V22.3" stroke="#222" stroke-width="0.9"/></svg>
<svg style="left:2281px;top:494px" width="10" height="15"><polygon points="1,1 8,1 8,5 5.5,8 3.5,8 1,5" fill="#cfcfcf"/><rect x="4" y="7" width="1.3" height="7" fill="#cfcfcf"/></svg>
<span class="t" style="left:2300px;top:496px;font-size:11px;color:#e4e8ec;letter-spacing:0.25px">00:00:28;08</span>
<svg style="left:2374px;top:494px" width="16" height="14"><rect x="1.5" y="2.5" width="11" height="9" stroke="#ddd" fill="none"/><polygon points="8,1 13,1 13,6" fill="#f8a83a"/></svg>
<svg style="left:2467px;top:494px" width="16" height="14"><rect x="1.5" y="2.5" width="11" height="9" stroke="#ddd" fill="none"/><polygon points="1,1 5,1 1,5" fill="#f8a83a"/><polygon points="9,1 14,1 14,5" fill="#f8a83a"/><rect x="1" y="1" width="13" height="1.5" fill="#f8a83a"/></svg>
<span class="t" style="left:2488px;top:496px;font-size:11px;color:#5a5e62;letter-spacing:0.25px">00:00:43;29</span>
<div style="left:2538px;top:0px;width:16px;height:17px;background:#3a3a3a;"></div>
<svg style="left:2540px;top:2px" width="12" height="13"><path d="M2,11 V1.5 H10 V7.5 H4" stroke="#e8e8e8" stroke-width="1.4" fill="none"/><polygon points="2,7 6,7 2,11" fill="#e8e8e8"/></svg>
<div style="left:2538px;top:17px;width:16px;height:18px;background:#2a2a2a;"></div>
<svg style="left:2541px;top:22px" width="10" height="6"><polygon points="0.5,5 5,0.5 9.5,5" fill="#e8e8e8"/></svg>
<div style="left:2538px;top:35px;width:16px;height:260px;background:#474747;"></div>
<div style="left:2541px;top:162px;width:10px;height:1px;background:#2c2c2c;"></div>
<div style="left:2541px;top:166px;width:10px;height:1px;background:#2c2c2c;"></div>
<div style="left:2538px;top:295px;width:16px;height:115px;background:#2c2c2c;"></div>
<div style="left:2538px;top:410px;width:16px;height:17px;background:#2a2a2a;"></div>
<svg style="left:2541px;top:414px" width="10" height="6"><polygon points="0.5,0.5 9.5,0.5 5,5" fill="#e8e8e8"/></svg>
<div style="left:2538px;top:427px;width:16px;height:40px;background:#454545;"></div>
<svg style="left:2540px;top:430px" width="12" height="32"><rect x="2" y="4" width="8" height="2" fill="#e8e8e8"/><rect x="5" y="1" width="2" height="8" fill="#e8e8e8"/><rect x="2" y="26" width="8" height="2" fill="#e8e8e8"/></svg>
</body></html>
